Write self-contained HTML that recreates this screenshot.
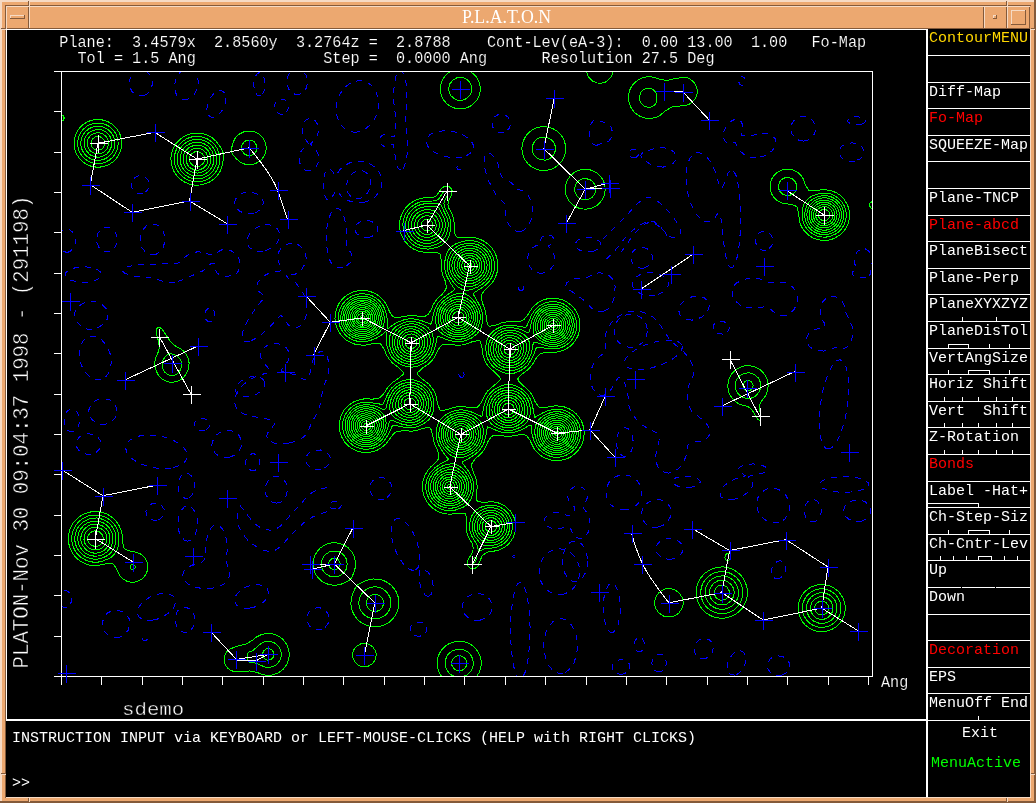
<!DOCTYPE html>
<html><head><meta charset="utf-8"><title>PLATON</title>
<style>
html,body{margin:0;padding:0;background:#000;}
svg{display:block;will-change:transform;}
text{white-space:pre;}
.hf{font-family:"Liberation Mono","DejaVu Sans Mono",monospace;font-size:15.17px;fill:#fff;stroke:#000;stroke-width:0.15px;}
.bf{font-family:"Liberation Mono","DejaVu Sans Mono",monospace;font-size:20.75px;fill:#fff;stroke:#000;stroke-width:0.45px;}
.mf{font-family:"Liberation Mono","DejaVu Sans Mono",monospace;font-size:15px;fill:#fff;}
.tf{font-family:"Liberation Serif","DejaVu Serif",serif;font-size:19.5px;fill:#fff;}
.g{fill:none;stroke:#0f0;stroke-width:1;}
.b{fill:none;stroke:#00f;stroke-width:1;stroke-dasharray:6 6;}
.w{fill:none;stroke:#fff;stroke-width:1;}
.bx{fill:none;stroke:#00f;stroke-width:1;}
</style></head><body>
<svg width="1036" height="803" viewBox="0 0 1036 803">
<g shape-rendering="crispEdges">
<rect x="0" y="0" width="1036" height="803" fill="#eca870"/>
<rect x="0" y="0" width="1036" height="2" fill="#f6dac4"/><rect x="0" y="0" width="2" height="803" fill="#f6dac4"/>
<rect x="0" y="801" width="1036" height="2" fill="#845a3a"/><rect x="1034" y="0" width="2" height="803" fill="#845a3a"/>
<rect x="5" y="5" width="1026" height="1" fill="#845a3a"/>
<rect x="5" y="5" width="1" height="793" fill="#845a3a"/>
<rect x="6" y="6" width="1024" height="1" fill="#f6dac4"/>
<rect x="6" y="6" width="1" height="23" fill="#f6dac4"/>
<rect x="6" y="797" width="1025" height="1" fill="#f6dac4"/>
<rect x="1030" y="29" width="1" height="769" fill="#f6dac4"/>
<rect x="7" y="28" width="1023" height="1" fill="#845a3a"/>
<rect x="1029" y="7" width="1" height="22" fill="#845a3a"/>
<rect x="28" y="7" width="1" height="21" fill="#845a3a"/>
<rect x="29" y="7" width="1" height="21" fill="#f6dac4"/>
<rect x="10" y="15" width="15" height="1" fill="#f6dac4"/>
<rect x="10" y="15" width="1" height="4" fill="#f6dac4"/>
<rect x="10" y="18" width="15" height="1" fill="#845a3a"/>
<rect x="24" y="15" width="1" height="4" fill="#845a3a"/>
<rect x="983" y="7" width="1" height="21" fill="#845a3a"/>
<rect x="984" y="7" width="1" height="21" fill="#f6dac4"/>
<rect x="1006" y="7" width="1" height="21" fill="#845a3a"/>
<rect x="1007" y="7" width="1" height="21" fill="#f6dac4"/>
<rect x="993" y="15" width="4" height="1" fill="#f6dac4"/>
<rect x="993" y="15" width="1" height="4" fill="#f6dac4"/>
<rect x="993" y="18" width="4" height="1" fill="#845a3a"/>
<rect x="996" y="15" width="1" height="4" fill="#845a3a"/>
<rect x="1011" y="10" width="15" height="1" fill="#f6dac4"/>
<rect x="1011" y="10" width="1" height="15" fill="#f6dac4"/>
<rect x="1011" y="24" width="15" height="1" fill="#845a3a"/>
<rect x="1025" y="10" width="1" height="15" fill="#845a3a"/>
<rect x="28" y="1" width="1" height="5" fill="#845a3a"/>
<rect x="29" y="1" width="1" height="5" fill="#f6dac4"/>
<rect x="1006" y="1" width="1" height="5" fill="#845a3a"/>
<rect x="1007" y="1" width="1" height="5" fill="#f6dac4"/>
<rect x="1" y="28" width="5" height="1" fill="#845a3a"/>
<rect x="1" y="29" width="5" height="1" fill="#f6dac4"/>
<rect x="1031" y="28" width="4" height="1" fill="#845a3a"/>
<rect x="1031" y="29" width="4" height="1" fill="#f6dac4"/>
<rect x="1" y="773" width="5" height="1" fill="#845a3a"/>
<rect x="1" y="774" width="5" height="1" fill="#f6dac4"/>
<rect x="1031" y="773" width="4" height="1" fill="#845a3a"/>
<rect x="1031" y="774" width="4" height="1" fill="#f6dac4"/>
<rect x="28" y="798" width="1" height="4" fill="#845a3a"/>
<rect x="29" y="798" width="1" height="4" fill="#f6dac4"/>
<rect x="1006" y="798" width="1" height="4" fill="#845a3a"/>
<rect x="1007" y="798" width="1" height="4" fill="#f6dac4"/>
<rect x="6" y="29" width="1024" height="768" fill="#000"/>
</g>
<text class="tf" x="462" y="23.2" textLength="89" lengthAdjust="spacingAndGlyphs">P.L.A.T.O.N</text>
<g shape-rendering="crispEdges">
<path class="w" d="M53.5,71.5H872.5V676.5H53.5M61.5,71.5V685"/>
<path class="w" d="M53.5,111.5H61.5M53.5,152.5H61.5M53.5,192.5H61.5M53.5,232.5H61.5M53.5,273.5H61.5M53.5,313.5H61.5M53.5,353.5H61.5M53.5,394.5H61.5M53.5,434.5H61.5M53.5,474.5H61.5M53.5,515.5H61.5M53.5,555.5H61.5M53.5,595.5H61.5M53.5,636.5H61.5M101.5,676.5V685M142.5,676.5V685M182.5,676.5V685M222.5,676.5V685M263.5,676.5V685M303.5,676.5V685M343.5,676.5V685M384.5,676.5V685M424.5,676.5V685M464.5,676.5V685M505.5,676.5V685M545.5,676.5V685M586.5,676.5V685M626.5,676.5V685M666.5,676.5V685M707.5,676.5V685M747.5,676.5V685M787.5,676.5V685M828.5,676.5V685M868.5,676.5V685"/>
<!--BLUE-->
<clipPath id="pc"><rect x="62" y="72" width="810" height="604"/></clipPath>
<g clip-path="url(#pc)">
<path class="b" d="M188,99.1 183,99.5 179,97.6 177,95.5 175.7,93 174.5,87 175.2,81 178.1,75 180,72.7 183,70.4 188,69 192,69.9 195,72.2 197.6,77 198.4,82 197.5,88 195.2,93 192,96.7 188,99.1ZM300,94.2 296,94.6 292,93 288.6,89 287,84 287,79 288.9,74 292,70.5 296,68.9 300,69.3 303,71 306,75 307.3,79 307.3,84 306,88.5 303.5,92 300,94.2ZM145,95.1 140,96 136,94.8 132,91.5 129.7,87 129.2,82 130.5,77 133.4,73 138,70.5 143,70.3 146.9,72 149.9,75 151.9,79 152.4,84 151.1,89 148.2,93 145,95.1ZM401,170.1 399,169.1 398,167.7 396.2,163 393.6,145 392,144.3 388,146.4 384,146.4 380.8,144 379.9,142 379.7,140 381,136.4 384,134.3 388,134.3 393,137.1 394,136.6 394.7,135 395.7,128 396,121 393.8,102 394,88 396,76.4 398,71.9 400,70.3 402,71 404,74.3 405.6,80 406.6,87 407,100 405.2,120 407.6,145 407.2,154 406,161.5 404,167.3 402.9,169 401,170.1ZM261,95.4 259,95.9 257,94.8 255,91.6 253.9,87 253.9,82 255,77 257,73.8 259,72.8 261,73.3 263,75.5 264.4,79 265,83 264.8,87 264,91 263,93.2 261,95.4ZM743,85.2 741,85.2 740,84.6 738.7,82 738.6,80 739.4,78 740.4,77 742,76.5 744,77.3 745.4,80 745.1,83 743,85.2ZM357,132.1 353,132.1 349,131.1 345,128.9 341.9,126 339,121.7 337.2,117 336.3,112 336.3,107 337,102 339,96.2 341.3,92 344.4,88 348,84.8 352,82.5 357,81 361,80.8 365,81.6 368,83 371,85.1 374,88.4 376.1,92 377.8,97 378.5,106 377.7,111 376.1,116 374,120.1 371.2,124 365,129.3 361,131.2 357,132.1ZM214,117.1 212,117.2 210,116.6 207.7,114 206.8,109 207.8,103 210.2,98 214,93.3 218,90.9 222,90.8 224.6,93 225.7,96 225.9,100 225.1,104 223,109 221,112 218,115 214,117.1ZM283,114 280,114 277.8,113 275.9,111 274.7,108 274.7,105 275.9,102 277.8,100 280,99 283,99 285.2,100 287.2,102 288.3,105 288.3,108 287.1,111 285.2,113 283,114ZM504,132.3 500,132.6 497,131.7 494,129.3 492.3,126 492,122.4 493,119.1 495,116.5 498,114.7 501,114.1 505,114.9 508,117.1 510,120.4 510.5,124 509.3,128 507,130.7 504,132.3ZM804,141.1 799,140.3 795,137.9 792.1,134 790.9,129 791.7,124 794.3,120 798,117.4 803,116.2 808,117.1 812,119.8 814.8,124 815.7,128 814.9,133 812.5,137 808.3,140 804,141.1ZM862,124.1 856,124.8 851,124 848,122 847.8,120 850.1,118 853.7,117 858,116.8 862,117.5 864.9,119 865.8,121 864.4,123 862,124.1ZM309,171 305,170 302,167.5 299.7,163 299.1,158 300,153.3 301.8,150 308.7,144 303.2,136 302.1,132 302,129 303,124.2 304.9,121 307,119.2 310,118.3 313,119 315,120.5 316.8,123 318,126.1 318.4,131 317.2,136 315.4,139 310.5,144 317,151.6 318.3,155 318.7,159 318,163.3 316,167.2 313,169.9 309,171ZM597,145.2 594,144.9 592,142.9 590.3,139 589.5,134 589.7,129 591,124 593,121 596,119.7 608.7,124 611.1,127 612.4,132 611.6,137 609,140.9 607,142 602,143 597,145.2ZM756,158 750,157.6 745,155.2 739,150.2 737.6,148 736,143.6 735,142.5 729,143.3 727,142.8 724.8,141 723.4,137 724,131 727,125.2 731,121.3 734,119.7 737,119.3 739,119.9 741,121.5 742.2,124 742.5,127 741.2,134 741.5,135 743,135.8 751,136.1 758,133.7 765,133.1 771,134.7 774.8,138 775.9,141 775.9,144 774.2,148 772,150.9 768.1,154 764.3,156 756,158ZM462,157 455,157.7 448,157.1 441,155.3 435.7,153 431.2,150 427.7,146 426.3,142 427.1,138 429.6,135 433,133 438,131.5 443,130.9 449,131.1 454.6,132 460,133.7 464.9,136 469.1,139 471.8,142 473.2,145 473.5,148 472.4,151 470,153.6 466,155.9 462,157ZM855,161 851,161.4 847,160.8 843.2,159 840.9,157 839.4,154 839.2,151 840.4,148 842.1,146 846,143.8 852,142.8 857.6,144 861.9,147 863.8,151 863.3,155 862.1,157 860,158.9 855,161ZM663,167.1 657,166.7 651.9,165 643,159.8 641.4,158 640.9,155 642.4,153 645,151.4 657,147.9 664,147.6 671,149.8 673.9,152 675.9,155 676.3,158 675.7,160 673.5,163 670.6,165 667,166.4 663,167.1ZM636,157.4 633,157.8 631.2,157 630,155.7 629.4,154 629.6,152 630.9,150 632,149.3 635,149 636.9,150 638,151.5 638.5,155 636,157.4ZM521,231.3 518,231.5 515,230.6 512,228.5 509.1,225 507.2,221 506,216.6 505.3,205 503.9,203 496,195 488,179.7 485.3,171 484.3,163 485,156.3 487,153.2 489,152.8 491,153.7 495,158.2 498,164.1 501.4,176 502.8,178 505,179.6 510.4,182 518,189.3 522,190.5 525,192.2 528,195.3 530.1,199 531.7,204 532.4,209 532.3,214 531.3,219 529.3,224 527,227.4 524,230 521,231.3ZM733,267.3 731,267.7 729,265.8 726,257.3 724,245.3 721.7,222 720,214.1 719,212.5 718,213 714,218.9 711.4,221 708,222 704,221.1 700,218.4 696,213.7 692.3,207 689.5,200 687.7,193 686.4,185 685.9,177 686.4,170 687.9,163 690,158.2 693,154.6 696,152.9 699,152.6 703,154 707,157.3 710,161.1 715,170.7 719.5,186 720,187.4 721,188.3 722,187.6 724,184 728,173.3 730,170 732,169.3 733,169.8 736,175.4 738.1,184 739.9,199 740.6,213 740.5,227 739.7,241 738,253.5 736,261.7 733,267.3ZM365,202.1 360,202.8 356,202.7 348,200.6 341.7,197 337,190.4 336,189.9 331,199.4 329,200.6 327,199.6 325,196.2 324.1,193 323.3,184 324.4,175 325.4,172 327,169.5 328,168.9 330,169 332.2,171 335,175.1 336,175.5 339.6,170 344,165.9 350,162.7 357,161.3 362,161.5 367,162.6 371,164.4 374.8,167 378.5,171 381.1,176 382,181 381.4,187 379,192.4 375,197 370.5,200 365,202.1ZM460,169.4 457.4,169 456.8,168 457,166.9 459,165.9 461,166.9 461.2,168 460,169.4ZM143,193.3 139,193.6 136,192.6 133,190 131.6,187 131.4,183 132.6,180 135,177.4 138,175.9 142,175.8 145,177 147.3,179 148.9,182 149.2,186 148.2,189 146,191.6 143,193.3ZM254,213.1 249,213.8 244,213.1 240,211.4 237.1,209 235.3,206 234.8,202 235.7,199 237.9,196 243.1,193 250,192.1 256,193.5 260.9,197 263,201 263.1,204 262.6,206 259.8,210 257,211.9 254,213.1ZM343,267.1 340,267.7 337,267.6 334,266.2 331.8,264 329.3,259 326.7,246 326.2,233 328,220.5 331.4,212 334,209.1 336,208.1 338,208.2 340,209.6 342,212.5 344,217 345.6,223 346.6,230 346.7,246 351.4,254 352.2,257 351.8,260 349.9,263 347,265.3 343,267.1ZM370,237.1 367,237.5 363,237.1 359.9,236 357.1,234 355.6,232 354.9,229 355.6,226 357,224 361,221.5 366,220.5 371,221.1 375.9,224 378,228 377.4,232 374.7,235 370,237.1ZM156,254.3 151,254.9 146,252.7 142.1,248 140.3,242 140.4,236 142.6,230 146.2,226 151,224 156,224.5 160,227 163,231 164.7,236 164.8,242 163,247.8 160,251.8 156,254.3ZM263,251.1 259,251.4 255.7,251 252.8,250 250,248 248.4,246 247.3,243 247.2,240 247.9,237 249.5,234 251.9,231 258,226.8 262,225.4 266,224.8 270,225 273,225.9 277,228.6 279,232 279.4,236 278.1,241 276.3,244 272.8,247 268,249.6 263,251.1ZM110,251.3 106,251.8 102,250.3 99,247.4 97,243 96.6,238 98,233 101,229.2 105,227.2 109,227.2 112.6,229 115.2,232 117,236.6 117.2,241 116,245.3 113.5,249 110,251.3ZM68,252.2 64,251.9 61,249.9 58.9,247 57.5,242 57.9,237 59.8,233 63,230 66,229.1 69,229.5 72,231.5 74.4,235 75.4,239 75.4,243 74,247.2 71,250.8 68,252.2ZM766,250.1 762,250 759,248.4 756.9,246 755.5,242 755.8,238 757.2,235 760,232.3 763,231.3 766,231.4 769.4,233 771.8,236 772.8,239 772.7,243 771.5,246 769,248.7 766,250.1ZM543,273.1 540,273.2 537,272.5 534,271.1 531.5,269 529.4,266 528.2,263 527.7,257 529,252.7 532,248.4 535,246.2 540.6,244 540.7,240 542.1,237 545,235.3 549,234.9 552,236.1 553.9,239 553,242 548.7,246 548.8,247 552,250.6 553.7,254 554.5,257 554.4,261 553,265.7 550.7,269 547,271.8 543,273.1ZM594,251 587,251.8 580,250.3 577.8,249 575.8,247 575.1,245 575.4,243 578.1,240 584,237.8 590,237.5 596,238.9 600,241.9 600.9,245 600.2,247 599,248.4 594,251ZM250,341.2 246,341.9 243.5,341 242.2,339 242,335 244,328 249,318.2 255,309.3 263.9,298 264.2,297 263.5,295 258.4,291 257.1,289 256.8,286 258,282.3 261.3,278 266,274.6 271,272.6 280,271.1 281.3,270 281.2,268 278.1,261 277.7,257 279,251.4 282,247 286,244.6 290,243.5 294,243.5 298.6,245 303,248.6 305.4,253 306.2,258 304.9,264 301.8,269 297,273.5 293,274.9 287,273.4 285.9,274 285.9,275 288.7,279 293,280.4 296,283.1 302.8,293 305,297 306.7,303 307.1,309 306.3,315 304.6,320 302.9,323 300,326 297,327.5 294,327.8 291,326.9 289,325.5 286.8,323 283,316.8 281,315.7 280,316 270,326.7 263,333.1 256,338.2 250,341.2ZM644,268.2 640,268.1 636,266.5 633,263.8 631.1,260 631,256 632.6,252 635.7,249 639,247.6 643,247.4 647,248.6 650,251 652.2,255 652.5,259 651,263 648,266.2 644,268.2ZM866,277.3 862,278 857,277.4 853.9,276 852.4,274 852.7,272 854.9,269 855.6,267 854.2,261 855.2,255 858,250.8 862,248.7 865.5,249 868.7,251 870.8,254 872.1,258 872,263 870.1,269 870.6,272 870.4,274 868.7,276 866,277.3ZM175,282.1 166.1,282 150,277.7 138,276.7 131,275.6 124.3,273 123,271.5 122.9,270 124.9,268 126.9,267 136,264.9 144,264.3 176,263.8 180.3,262 185,257.2 188,255 192.3,253 197,251.9 203,252.1 211,255.1 214,254.2 221,250.1 224,249.6 228,249.9 231.5,251 234.8,253 237.6,256 239,258.9 239.5,262 238.5,271 236,273.9 233,275.5 226,276.4 222,275.7 219,274.5 217.2,273 216,271 215.4,265 214,263.7 212,263.3 210,264.2 206,268.5 202,271.3 181,280.5 175,282.1ZM88,282.1 78,282 70.5,280 66.2,277 65.4,275 65.7,273 67.4,271 71,269 76,267.6 82,266.9 87,267 92.9,268 98,270 100.5,272 101.5,275 99.7,278 95,280.6 88,282.1ZM604,311.3 601,311.9 598,311.8 593,309.6 586,302 576,294.3 566.6,288 565.5,286 566.7,283 569,280.9 573,278.9 576,278.2 583,278.1 587,277.4 598,272.9 604,273.1 609,275.3 612.6,279 614.5,283 615.1,287 614.6,295 613.5,300 611,305.5 608,309.1 604,311.3ZM655,295 650,295.4 645,294.9 640,293.3 636.1,291 633.5,288 632.4,285 632.7,282 634.2,279 636.2,277 640,274.7 644,273.1 647,272.7 653,272.8 657,273.5 661.3,275 664.5,277 666.5,279 668,282 668.3,285 667.2,288 665.7,290 663,292.1 659.1,294 655,295ZM786,315.2 782,315.6 778,314.6 775,312.9 770,308.9 765,306.8 751,308 745.1,307 740.3,305 736,301.7 732.9,297 732.1,291 733.5,286 736.4,283 742.7,280 747,278.7 752,278.1 759.8,279 770,282.8 783,282.6 786,283 789,284.2 792.6,287 795.4,291 797,296 797.2,301 796,305.8 793.7,310 790,313.4 786,315.2ZM522,290.5 520,290.5 518.5,289 518.5,287 520,285.5 522,285.5 523.5,287 523.5,289 522,290.5ZM692,320.1 688,319.8 685.1,319 680.8,316 679.6,314 678.9,311 679.2,308 680.5,305 682.8,302 685.2,300 691.5,297 698,296.2 702,296.9 704.4,298 707.7,301 709,304 709,307.4 707.7,311 705.4,314 701.7,317 697,319.1 692,320.1ZM824,351.1 817,350.5 811,347.8 809,346 807.1,343 806.5,341 806.6,338 808.6,334 812,331 816,329.3 822,327.7 824.6,326 824.8,324 821.4,318 820.2,314 820,310 821,305.2 823.3,301 827,297.7 831,296.3 835,296.5 840,299.1 842,301.3 844,304.9 846,313 852.1,326 853,332 852.5,337 850,343.5 848,346.1 846,347.7 843,348.4 838,347.1 836,347.1 830,349.9 824,351.1ZM92,330 87,329 79.9,325 76.2,321 74.5,316 75.2,311 78,306.7 83,303.2 89,301.6 96,302 102,304.6 106.4,309 108.1,314 107.4,319 104,323.9 97,328.3 92,330ZM210,322.1 208,321.6 206.2,320 205,317.2 204.8,315 205,312.9 206.2,310 208,308.4 210,307.9 212,308.5 213.5,310 214.5,312 214.9,315 214.5,318 213.5,320 212,321.5 210,322.1ZM669,473.1 665,472.7 661,470.6 658,467 656.4,463 655.7,459 655.7,455 659,441 659.1,438 658.6,435 657,433 648.5,429 642.3,425 637,420.1 633,415 630.8,411 629,406 627.8,394 626.5,388 624.2,382 622,378.6 620,377.1 618,378 610,391.2 607,393.9 604,395.2 600,395.1 596,392.8 593,389 591,384 590.2,379 590.3,375 591.1,370 592.9,365 597,358.6 603.9,353 605.2,351 604.9,338 605.9,333 608,328 611.2,323 616.1,318 622,314.2 628,312 635,311.2 641,311.7 648,314 653,317 659,323.2 670,340.3 682.9,351 688.9,358 692.5,365 693.8,372 692.7,378 688.9,385 687.6,389 687.6,398 689.4,407 691.6,411 705,422 708,425.8 709.5,429 709.9,432 709.3,435 708.2,437 706,439 701.3,441 692,442.3 688.8,444 687.6,446 686,456.4 682.4,464 679.1,468 676,470.5 673,472.1 669,473.1ZM723,334.1 718,333.7 716,332.8 713.9,331 713,329 713,326.4 714,324.4 716,322.6 719,321.4 723,321.4 726.9,323 728.7,325 729.4,328 728.3,331 726,333 723,334.1ZM101,379.3 98,379.7 95,379.3 92,378.2 88.7,376 85.7,373 83,369.1 80,361.5 79.1,353 79.6,349 80.8,345 82.4,342 85,339 90,336.4 93,336.1 96,336.8 102,340.2 107,346.3 110.2,354 111.3,362 110,370 108.6,373 106.4,376 104,378 101,379.3ZM289,443.2 283,443.9 278,443.7 274,443 269.6,441 267.1,438 266.9,435 268.3,432 274.9,424 275,422 273,420.8 266.6,419 249,415.8 243.6,414 240,411.8 237.2,409 235.5,406 234.7,403 234.7,399 236.2,394 239,389.4 243,384.9 248,381 253,378 259,375.4 268,372.6 270.2,371 269.1,369 262.2,361 260.9,358 260.6,355 261.6,351 264,347.7 267.9,345 272,343.7 277,343.5 282.3,345 286.4,348 288.9,352 289.5,355 288.9,359 286.8,363 282,369 281.4,370 281.6,371 283.8,372 295,374.7 305,380 307,379.5 309.1,377 313,360.1 315.1,356 317.9,353 320,351.8 322,351.4 325,352.7 327.1,356 328.4,361 328.9,367 328.3,373 326.6,379 322.9,388 320.4,404 317.4,413 311.3,423 308.4,431 305.7,435 302.2,438 298.7,440 289,443.2ZM829,449.1 826,448.5 824,446.4 822,442.4 820.6,437 819.6,430 819.3,422 820.4,405 823,390 828,374 831,367.8 834,363.4 837,360.7 840,359.8 843,361.3 845,364 847.7,373 848.8,387 847.9,403 845,419.4 840,435.3 835,444.5 832,447.7 829,449.1ZM463,377 461,377.4 459.1,376 458.8,374 460,372.4 462,372 463.6,373 464.2,375 463,377ZM106,424.1 101,424.3 96,422.7 92,419.7 89.3,415 88.8,410 90.6,405 94,401.4 99,399 105,398.6 110,400.1 114,403.2 116.8,408 117.2,413 115.3,418 111.3,422 106,424.1ZM73,432 70,431.9 67,429.7 65,426.3 64.1,422 64.4,417 65.9,413 68,410.4 71,409 74,409.5 77,412 78.5,415 79.4,419 79.3,423 78,427.4 76,430.3 73,432ZM205,430.1 200,430.4 198,429.7 195.8,428 194.6,426 194.4,424 195,422 196.8,420 200,418.6 203,418.4 206,419.2 208.4,421 209.5,423 209.5,426 208,428.3 205,430.1ZM626,456.3 622.6,456 619.3,453 617.1,448 616.4,443 616.9,437 618.8,432 622,428.6 625,427.7 628,428.7 630.2,431 632,435 633.1,441 632.8,446 631.3,451 629,454.5 626,456.3ZM230,457.1 224,457.6 219,456.1 214.9,453 212.3,448 211.9,445 212.3,442 214.6,437 218.8,433 224,430.8 230,430.5 235,432.1 239,435.4 241.3,440 241.7,443 241.3,446 239,451 235,454.9 230,457.1ZM91,454.2 87,454.3 82.5,453 79,450.5 77,447.5 76.2,444 77.2,440 79.5,437 83,434.8 88,433.7 94,434.7 98,437.2 100.5,441 101,445 99.5,449 96,452.4 91,454.2ZM171,468.1 163,468.6 154,467.8 145,465.5 137,462 131.2,458 127,453 125.6,448 126.5,444 129,440.8 133.5,438 139.6,436 146,435.2 153,435.2 161,436.3 168,438.2 175,441.2 180.9,445 184.8,449 186.9,453 187.2,457 185.5,461 182.4,464 177,466.6 171,468.1ZM321,469.2 317,469.4 313,468.6 309.8,467 306.9,464 305.7,461 306,457.2 307.8,454 310.2,452 315,450.1 320.4,450 325.8,452 329,455.1 330,457.1 330.4,460 329.2,464 326,467.2 321,469.2ZM255,470.3 252,470.7 249,469.4 246.9,467 245.8,464 245.9,460 247,457.3 249.1,455 252,453.8 254.5,454 257,455.3 259,457.8 260,461 259.9,464 259,466.7 257.2,469 255,470.3ZM734,499.2 729,499.8 724,499 721,496.9 720.1,495 720,492.9 720.9,490 722.9,487 728.8,482 735,478.9 745.4,476 739,470.7 738.5,469 739.8,467 745,464.8 753,463.9 761,464.9 765.6,467 766.6,468 766.9,470 765,472 762,473.3 750.4,476 748.3,477 752,479.9 753,482 752.9,485 751.6,488 748.1,492 744.1,495 739,497.6 734,499.2ZM188,498.4 185,498.4 181.6,496 179,492 178,488 178,483.7 179.2,479 182,474.7 185,473 188,473.3 191.7,476 194,480 194.8,484 194.6,489 193.3,493 191,496.3 188,498.4ZM626,510 619,509.6 613,506.6 610.1,504 608.1,501 606,495 606.4,488 609.2,482 611.9,479 614.7,477 621,474.8 628,475.1 634.1,478 637,480.6 639,483.4 641.3,490 641,496.4 639.9,500 638.4,503 635.3,506 632.2,508 626,510ZM277,503.1 273,502.5 269,499.8 266.1,495 265.2,490 265.9,485 268,480.7 272,477.2 276,476.2 280,476.9 284,479.9 286.4,484 287.4,489 286.8,494 285,498.1 281,501.9 277,503.1ZM692,487.1 684,487.4 677.4,486 675,484.7 673.3,483 672.9,482 673.2,480 675,478.2 677,477.3 685,476.2 693,476.9 698.3,479 700,481 700,482.4 699.1,484 695.9,486 692,487.1ZM851,492 839,492.1 829,490.7 822,488 819.8,486 819.4,484 822,481 826.5,479 834,477.4 842,476.7 851,477 858,478 864.4,480 868.5,483 868.9,485 868.5,486 865,488.7 858,491 851,492ZM384,499 380,499.4 376,498.4 372.8,496 370.3,492 369.8,487 371,483.1 373.5,480 377,477.9 382,477.3 386,478.5 389.2,481 391.4,485 391.9,489 390.9,493 388,496.8 384,499ZM582,538.3 578,538.2 575,536.3 573,533.8 570.8,529 569,527.1 567,526.6 558,529.1 552,528.5 547,526 545,523.5 544.3,521 545,518.3 546.8,516 549.9,514 553,513 560,512.9 568,515.9 570,515.7 572.3,514 574.5,511 575.1,509 574.4,507 569,500.9 567.9,498 568,494 569,491.4 571,488.9 574,487 577,486.4 580,486.6 583,488 585.2,490 586.9,493 587.2,498 583.7,506 583.5,508 588,514.4 589.9,521 589.8,527 588.3,532 585.7,536 582,538.3ZM779,522.3 773,522.8 766.9,521 761.7,517 758,511 756.6,504 758,497.4 761.8,492 767,488.9 773,488.1 777,488.9 780,490.2 783,492.2 785.7,495 788.9,501 789.9,508 788.4,514 784.8,519 782,521 779,522.3ZM658,527.1 651.7,527 648.8,526 646,524.2 642.8,520 641.6,514 642.4,508 643.4,506 645,504.3 652,500.5 658,499.4 663,500.3 667.3,503 670.2,507 671.2,512 670.3,517 667.2,522 663,525.3 658,527.1ZM816,521.1 812,521.9 809,520.9 806.1,518 804.5,514 804.2,509 805.3,505 808,501.4 811,499.8 814,499.7 817,501.1 819.5,504 821,508 821.2,512 820.2,516 818.4,519 816,521.1ZM862,521 857,521.7 853,521.1 849,519.4 846,516.8 844,513 843.7,510 845.1,506 847.7,503 853,500.4 859,499.9 865,501.7 868.8,505 870.7,509 870.2,514 869,516.3 867,518.4 862,521ZM336,509 332,508.5 329.6,507 328.9,505 330,503.2 332.1,502 335,501.5 338,501.9 340.2,503 341.5,505 340.8,507 339,508.3 336,509ZM157,520.1 153,520.1 150.2,519 147.8,517 146.2,514 145.9,511 146.8,508 149,505.4 152,503.8 156,503.3 159,504.1 162,506.1 164,509.3 164.3,513 163.2,516 160.1,519 157,520.1ZM188,541.1 186,540.9 184,539.8 181,536.4 178.8,531 177.9,524 178.6,517 180.8,511 184,507.2 186,506.1 188,505.8 192,507.7 195,511.7 197,517.7 197.5,524 196.8,530 194.6,536 192,539.4 190,540.7 188,541.1ZM414,570.2 412,570.2 409,569.1 406,566.9 403,563.7 398,556 394.1,547 391.8,538 391.2,529 391.8,525 392.9,522 394,520.3 396,518.8 398,518.4 401,519.1 404,520.9 407,523.7 413,532.4 417,541.6 419.5,552 419.8,561 419,565.4 418,567.7 416,569.5 414,570.2ZM213,588.1 202,588.4 197,587.6 191.9,586 188,584 184.7,581 183,578 182.6,575 184.1,571 188,567.3 193,564.8 201,562.7 204.3,560 205.6,557 205.8,544 208,533.8 210,529.6 212,527 214,525.5 217,525 220,526.3 222,528.5 224,532 226,538 227.2,548 226.6,562 229.2,573 229.4,576 228.1,580 224.1,584 219,586.6 213,588.1ZM672,559.1 667,559.1 663.1,558 659.7,556 657.1,553 656,549 656.5,546 658.3,543 662,540.2 668,538.5 674,539 679,541.3 682.2,545 683,547.4 683.1,550 681.3,554 678,557 672,559.1ZM564,594 560,594.6 556,594.3 552,593.1 548.4,591 545.1,588 542.8,585 540.8,581 539.4,576 539.1,572 539.5,567 541,562 543,558.2 545.5,555 549,552 553,550 556,549.2 560,548.9 564,549.5 567.9,551 571,553 574,555.9 576.2,559 578.1,563 579.2,567 579.6,572 579.3,576 578.3,580 576.5,584 574,587.6 571,590.5 568,592.4 564,594ZM515,557.4 513,557.4 512.8,556 515,555.3 515.7,556 515,557.4ZM780,578.1 777,578.9 774,577.8 772,575 771.5,572 772,568 774,564.2 777,561.6 780,560.8 782,561.2 784,562.7 785.2,565 785.6,568 785.2,571 784,574 782,576.6 780,578.1ZM429,596.1 427,596 425,594.8 423,592.4 420.9,588 419.6,582 419.1,575 419.7,571 421,569.6 424,569.6 427.9,572 430.2,575 432,579.2 433.1,585 432.9,590 431.4,594 429,596.1ZM521,678.3 519,678 517,675.7 514,667.5 511.5,652 510.4,633 511,613.9 513,597.9 516,587 518,583.6 520,582.4 522,583.1 524,585.9 527,595.4 529.1,609 530.1,628 529.6,645 527.8,661 525,672.5 523,676.5 521,678.3ZM613,632.5 611,632.6 609,631.3 606,626.2 604,618.3 603.2,609 603.9,598 605.9,590 609,584.5 612,583.1 615,584.9 618,590.7 619.7,598 620.4,606 620,615.5 618.3,624 616,629.6 613,632.5ZM250,608.1 246,608.4 242,607.9 239,606.8 236.5,605 235.2,603 234.6,600 235.2,597 236.8,594 242.3,589 246,587 251,585.3 259,584.7 263,585.7 265.4,587 267.4,589 268.5,592 268,595.8 266.3,599 263.5,602 259.1,605 254.5,607 250,608.1ZM67,607.2 64,607.4 62,606.4 60,604 59,601 59,597 60,594.2 62,591.8 64,590.8 67,591 68.7,592 70.3,594 71.4,597 71.6,600 70.9,603 69,605.9 67,607.2ZM153,620.1 148,620.5 144.3,620 141.6,619 139,616.9 137.6,614 137.6,611 139,607 141.1,604 144.1,601 148.4,598 153,595.7 158,594.1 163,593.3 167,593.5 170,594.3 173,596 175,598.9 175.4,602 174.5,606 172.7,609 168.5,613 164,616.1 158,618.9 153,620.1ZM480,620.2 474,620.1 469,618.2 465,614.7 462.6,610 462.4,605 464.3,600 468,596.3 473,594 479,593.5 485,595.4 489.4,599 491.9,604 492.1,609 490,614.1 485.8,618 480,620.2ZM187,632.1 183,632.1 179.3,630 177,627 175.4,622 175.5,617 177,611.6 179.5,609 183,607.7 187,607.8 190,609.2 193,612.6 194.6,617 194.8,622 193.2,627 190.9,630 187,632.1ZM322,629 318,629.8 313.9,629 310,626.4 307.8,623 306.9,618 307.9,614 310,610.9 314,608.3 319,607.6 323,608.7 326.1,611 328.5,615 329.1,619 328,623.5 325.4,627 322,629ZM120,637 115,637.6 109.6,636 105.8,633 102.9,628 102.3,623 104,617.2 107.6,613 112,610.7 117,610.1 122,611.5 126.7,615 129.3,619 129.9,624 128.3,630 125,634.3 120,637ZM563,673.1 559,673.2 556,672.3 553,670.4 550,667.2 547.9,664 545.8,659 543.9,649 543.9,643 544.5,638 546,632.4 547.9,628 550,624.8 553,621.7 556,619.8 560,618.7 563,619 566,620.1 569,622.3 572,625.8 575.8,634 577.5,644 576.8,654 573.9,663 572,666.2 569,669.7 566,671.9 563,673.1ZM420,636.2 417,636.1 414,635.1 411.5,633 410.4,631 410.2,628 411,625.9 413,623.7 416,622.2 420,622 423,622.9 425.6,625 426.7,627 427,630 425.7,633 423.4,635 420,636.2ZM146,640.3 143,640.2 142,639 142.2,638 144,636.9 146,637.1 147.2,638 147.4,639 146,640.3ZM641,651.5 639,651.8 637,651 635.3,649 634.4,646 635,640.9 637,638.3 639,637.5 641,637.8 642.5,639 644.4,643 643.9,648 642.8,650 641,651.5ZM706,658.3 702,658.8 698,657.3 695.8,655 694.3,651 694.4,647 696.1,643 699.2,640 703,638.5 706,638.5 709.5,640 712,642.8 713.1,646 713,650 712,653 709.7,656 706,658.3ZM735,675.1 731,674.8 728.2,672 727.2,668 727.7,663 729.8,658 733,653.8 737,651.2 741,650.9 743.2,652 745.2,655 745.9,659 745.3,663 743.8,667 741.2,671 738,673.8 735,675.1ZM660,672 657,671.7 654.5,670 652.6,667 651.9,664 652.2,660 653.7,657 656,654.8 659,653.9 662,654.7 664,656.4 665.6,659 666.3,662 666.1,665 665,668.2 663,670.6 660,672ZM782,675.1 778,675.5 774,674.7 771,673 768.5,670 767.4,667 767.7,663 770,659.2 773,657 777,655.8 782,656.3 786,658.3 788.9,662 789.7,666 788.6,670 786,673 782,675.1ZM623,674 620,674.2 617,673.5 614.5,672 612.8,670 612,667.8 612.3,665 613.4,663 616,660.9 620,659.8 623.5,660 627,661.5 629.3,664 630.1,667 629.2,670 627,672.4 623,674ZM237.2,513.1C237.7,515.7 237.2,523.5 239.8,528.7C242.4,533.9 247.2,540.7 252.9,544.4C258.5,548.1 266.8,553.1 273.7,550.9C280.7,548.7 288.5,536.8 294.6,531.3C300.6,525.9 304.3,521.8 310.2,518.3C316.1,514.8 326.7,511.8 330,510.5M239.8,505.3C242.9,508.7 252,522.2 258.1,526.1C264.2,530 270.2,531.3 276.3,528.7C282.4,526.1 288.5,516.6 294.6,510.5C300.6,504.4 306.9,496.2 312.8,492.2C318.7,488.3 327.1,487.9 330,487M602.6,239.4C606.1,235.9 616.1,225.5 623.5,218.6C630.8,211.6 639.5,199 646.9,197.7C654.3,196.4 662.1,205.1 667.8,210.7C673.4,216.4 680.4,227.2 680.8,231.6C681.2,235.9 675.1,238.5 670.4,236.8C665.6,235.1 658.6,222 652.1,221.2C645.6,220.3 637.4,226.8 631.3,231.6C625.2,236.4 620,245 615.6,249.8C611.3,254.6 606.9,258.5 605.2,260.3M620.8,252.4C623.5,249 631.7,236.6 636.5,231.6C641.3,226.6 645.2,222.9 649.5,222.5C653.9,222 659.5,226.4 662.5,229C665.6,231.6 666.9,236.6 667.8,238.1M682,345.5 682.1,348.3 680.8,351.4 678.1,354.7 674.1,358 669.1,361.1 663.4,363.9 657.1,366.3 650.6,368.1 644.3,369.2 638.4,369.6 633.3,369.2 629.2,368.2 626.3,366.4 624.7,364.1 624.6,361.3 625.9,358.2 628.6,355 632.6,351.7 637.6,348.5 643.4,345.7 649.6,343.4 656.1,341.6 662.4,340.5 668.3,340.1 673.4,340.4 677.5,341.5 680.5,343.2ZM647.3,330.7 646.9,334.4 645.7,337.9 643.7,341.1 641.1,343.7 638,345.6 634.5,346.9 630.8,347.3 627.1,346.9 623.6,345.6 620.4,343.7 617.8,341.1 615.8,337.9 614.6,334.4 614.2,330.7 614.6,327 615.8,323.5 617.8,320.4 620.4,317.8 623.6,315.8 627.1,314.6 630.8,314.2 634.5,314.6 638,315.8 641.1,317.8 643.7,320.4 645.7,323.5 646.9,327ZM264.5,381.5 264.8,383.6 264.4,385.8 263.4,388.1 261.6,390.3 259.3,392.4 256.5,394.1 253.5,395.5 250.2,396.4 247,396.9 243.9,396.8 241.1,396.2 238.8,395.2 237.1,393.7 236,391.8 235.7,389.8 236.1,387.5 237.1,385.2 238.9,383 241.2,381 244,379.2 247,377.9 250.3,376.9 253.5,376.5 256.6,376.6 259.4,377.1 261.7,378.2 263.4,379.7ZM587.5,561.3 587.2,565.8 586.3,570.1 584.8,574 582.8,577.2 580.4,579.6 577.8,581.1 575,581.6 572.2,581.1 569.6,579.6 567.2,577.2 565.2,574 563.7,570.1 562.8,565.8 562.5,561.3 562.8,556.8 563.7,552.5 565.2,548.6 567.2,545.4 569.6,543 572.2,541.5 575,541 577.8,541.5 580.4,543 582.8,545.4 584.8,548.6 586.3,552.5 587.2,556.8ZM369.7,188.7 368.3,191.6 366.5,194.1 364.2,196.2 361.7,197.7 359,198.5 356.3,198.7 353.8,198.1 351.4,196.9 349.5,195.1 348,192.7 347,189.9 346.6,186.9 346.8,183.8 347.6,180.7 349,177.8 350.9,175.2 353.1,173.1 355.6,171.6 358.3,170.8 361,170.6 363.6,171.2 365.9,172.4 367.9,174.3 369.4,176.6 370.3,179.4 370.7,182.4 370.5,185.6Z"/>
<path class="g" d="M602,83.1 597.1,83 592.4,81 589,77.7 588,76 586.9,73 586.6,70 586.9,67 588,64 589,62.3 592.4,59 597.1,57 600,56.7 602.4,57 607.2,59 611,62.9 612.1,65 612.9,68 612.9,72 612.1,75 611,77.1 607.2,81 605.5,82 602,83.1ZM466,108.1 462,108.8 458,108.8 454,107.9 451,106.6 447.2,104 444.4,101 442.5,98 441,94 440.3,90 440.5,86 441.5,82 442.9,79 445,76 448,73.1 451,71.2 455,69.6 459,69 463,69.1 467,70.1 470,71.4 473,73.5 475.6,76 477.7,79 479.4,83 480.2,87 480.2,91 479.3,95 478,98.2 476,101.3 473,104.3 470,106.4 466,108.1ZM653,118.1 649,118.4 646,118.2 640,116.3 637,114.5 634.1,112 630.6,107 628.6,101 628.4,98 628.7,94 629.4,91 631,87.4 633,84.5 635.4,82 638,80 642,78 645.9,77 649,76.8 653,77.1 659,79.1 667,80.6 673,78.9 677,78.6 681,77.4 685,77.4 687.8,78 690,79 693.7,82 696.2,86 697,88.8 697.2,92 697,94.1 696,97.2 695,99.1 692.4,102 689.6,104 687,105 682,105.3 678,106.5 673,106.7 671,107.3 665,111.2 660,115.4 656.8,117 653,118.1ZM61,121.1 60,120.9 58.6,120 57.9,118 58.6,116 60,115.1 61,114.9 63,115.6 63.9,117 64.1,118 63.9,119 63,120.4 61,121.1ZM100,167.1 96,167.1 91,166.2 87,164.6 83,161.9 79.1,158 76.5,154 75.3,151 74.2,146 74.1,141 75.2,136 77.4,131 79.6,128 83,124.6 86,122.6 91,120.4 96,119.5 100,119.5 105,120.5 109,122.2 113,124.8 116.2,128 118.9,132 120.7,136 121.7,141 121.7,146 120.5,151 118.7,155 116,158.9 113,161.8 109,164.5 104,166.4 100,167.1ZM548,170.1 544,170.5 539,170 535,168.7 531,166.4 528,163.8 525.1,160 523.2,156 522.2,152 521.9,148 522.4,144 523.7,140 525.9,136 528.4,133 532,130.1 536,128.1 540,127 545,126.7 549,127.3 553,128.7 556.8,131 560,133.9 562.4,137 564.3,141 565.4,145 565.7,149 565.3,153 564,157 561.9,161 559.4,164 556,166.8 552,168.9 548,170.1ZM254,164 251,164.6 247,164.6 244,163.9 241,162.6 236.5,159 233.1,155 231.6,152 231.6,148 233.3,142 234.7,139 237,136 239,134.3 244,131.7 247,131 251,131 254,131.6 257,132.8 260,134.8 262.2,137 264.2,140 265.4,143 266,146 266,150 265.3,153 264,156 262,158.9 259.8,161 257,162.8 254,164ZM200,185 195,185.1 190,184.3 185,182.3 181,179.7 177.1,176 174.3,172 172.4,168 171.2,163 170.9,158 171.6,153 173.3,148 176.4,143 180,139.3 184,136.4 189,134.2 194,133.1 199,133.1 203,133.7 208,135.4 212,137.7 216,141.2 219.7,146 222.6,151 223.7,155 223.5,159 221.9,167 220.3,171 217.7,175 214,178.9 210,181.8 206,183.6 200,185ZM587,209.1 583,209 579,208.2 575,206.3 572,204.1 569.1,201 567.3,198 566,194.6 565.3,191 565.4,187 566.2,183 568,179.1 570,176.3 573,173.4 576,171.5 579,170.2 583,169.4 587,169.3 591,170.1 595,171.8 598,173.9 601,177 602.9,180 604.2,183 605,187 605.1,191 604.3,195 602.6,199 600.5,202 597.4,205 594.2,207 591,208.3 587,209.1ZM829,240 824,240.5 818,239.8 814,238.4 809,235.5 804.4,231 802.3,228 800.8,225 799.5,221 798.6,213 796.9,207 795,205.6 789,204.1 784,203.6 781,202.7 777,200.5 773.5,197 771.7,194 770.6,191 770.1,188 770.2,184 770.9,181 772.2,178 774.3,175 777,172.5 781,170.3 785,169.2 790,169.2 794,170.3 798,172.5 801.5,176 803.3,179 805.1,184 807.8,189 809,190.3 811,190.8 815,190.8 821,189.9 825,189.7 831,190.6 836,192.6 839,194.4 842,197 844.6,200 847.5,205 848.6,208 849.4,212 849.5,218 848.7,222 847.6,225 844.8,230 840,235 834,238.6 829,240ZM475,568.3 472,568.7 470,568 468.1,566 467.3,564 467.3,562 467.9,560 472.7,552 473.2,548 472.4,544 468.4,537 466.7,532 466.1,527 466.3,520 465.9,515 465.4,514 464,513.3 459,513.2 451,514.1 447,514 443,513.3 438,511.5 433,508.4 429.4,505 426.4,501 423.7,495 422.6,490 422.4,486 423.2,480 424.6,476 428.1,470 430.7,467 435.3,463 438.3,459 439,457 437.8,451 434.2,443 432.4,434 431,429.5 430.1,428 428,427.5 424,428.1 416,430.5 412,431.1 403,430.8 397,431.6 395,432.7 392,435.7 386,443.8 381,448.1 377,450.3 374,451.4 370,452.3 366,452.6 361,452.1 356,450.7 352,448.6 348,445.6 344.7,442 341.7,437 340.2,433 339.3,428 339.4,422 341.4,415 344.2,410 348.9,405 354,401.7 360,399.5 365,398.8 373,399.1 379,398 380.4,397 384,393.3 387.4,388 390,384.9 393,382.1 397.7,379 402.5,375 403.6,374 403.8,373 403.3,372 399.1,368 393,363.4 389.8,360 386.5,355 384,348.9 381.4,345 380,343.7 378,343.2 373,343.4 368,344.7 364,345.2 357,344.7 353,343.6 349,341.7 346,339.8 343,337.2 340.3,334 338.4,331 336.6,327 335.5,323 335,319 335.1,315 335.9,311 337.2,307 339.3,303 341.6,300 345,296.6 348,294.5 352,292.4 355,291.4 360,290.5 364,290.4 369,291.2 373,292.5 377,294.6 381,297.7 385.5,303 390,312.6 392.4,316 394,317.1 400,317.2 410,315.4 414,315.5 419,316.4 424,316.3 426,315.9 428,314.4 431,310.1 433.1,305 435.5,301 438.1,298 442.4,294 445.3,290 446.2,288 446.3,286 445.2,281 442.7,275 441.4,270 441.1,266 441.2,260 440.4,255 439.9,254 438,252.9 433,252.2 425,252.4 419,251.4 414,249.3 409,245.9 404.6,241 401.3,235 399.6,228 399.8,221 401.4,215 403.4,211 406.3,207 410,203.5 415,200.4 420,198.6 425,197.7 432,197.6 435,196.7 437,195.1 439.5,191 442,188.1 444,186.7 446,186.1 448,186.2 450,187.2 451.5,189 452.2,191 451.6,195 448.2,202 447.9,205 448.8,208 452.4,215 453.6,219 454.2,223 454.3,230 455,234 455.7,236 457.3,237 462,237.6 469,237.2 474,237.5 478,238.5 483,240.6 488,244.1 491.8,248 494.5,252 496.6,257 497.7,262 497.9,267 497.2,272 495.5,277 492.7,282 490,285.3 484.9,290 482,294 481.2,296 482.1,302 485.4,311 487,321.7 487.9,325 488.8,326 490,326.3 496,325 501,323.1 505,322.1 509,321.7 516,321.9 522,320.8 524,319.4 527,316 532.1,308 537,303.4 540,301.5 544,299.7 548,298.6 552,298.2 557,298.5 562,299.7 566,301.5 571,305 574.7,309 577.7,314 579.4,319 580,323 579.9,329 578.3,335 575.1,341 571,345.6 565,349.6 560,351.5 555,352.3 547,352.3 542,353.1 540,354 536,358.4 532.7,364 530.5,367 527,370.4 522.2,374 518.3,378 517.8,379 518.6,381 521.3,384 527.1,389 530.7,393 532.5,396 535,401.5 538,405.8 539.3,407 541,407.6 545,407.6 555,405.8 562,406.3 566,407.4 570,409.2 573,411.1 576.4,414 579.6,418 581.4,421 582.6,424 583.7,428 584.2,433 583.9,437 582.8,442 581.6,445 579.2,449 577,451.7 574,454.5 571,456.7 567,458.7 564,459.7 559,460.5 555,460.6 550,459.8 546,458.4 542,456.3 539,454 536,451 533.7,448 530,440.3 528,437.4 526.9,436 525,434.8 519,434.7 514,435.8 509,436.4 505,436.2 500,435.3 495,435.3 493,435.6 491.1,437 488,441.6 485.7,447 483.2,451 480,454.6 475,459 471.6,464 471.5,466 472.4,470 475.5,477 476.8,482 477.2,487 476.6,494 476.8,500 477.2,501 479,501.9 485,502.2 492,501.7 497,502.4 502,504.3 506,506.8 510.3,511 513.4,516 514.6,519 515.5,523 515.6,529 514.9,533 513.4,537 511,541 508,544.5 504,547.6 500,549.6 496,550.8 488,551.9 485,553.4 482,556.2 478,565.8 477,567 475,568.3ZM874,208.4 873,208.6 871.1,208 869.6,206 869.4,205 870,203.1 872,201.6 873,201.4 874.9,202 876.4,204 876.6,205 876,206.9 874,208.4ZM174,382.1 171,382.3 168,381.8 165,380.7 162.3,379 160,377 158,374.5 155.4,369 154.8,365 155,361 156.1,357 158.7,351 159.2,348 159.1,345 157.9,339 156,332 156.6,329 158,327.7 160,327.7 162.1,329 170,340.9 173,344.3 175,345.8 181,349 184,351.4 186.7,355 188.4,359 189.1,363 188.8,367 187.7,371 186.2,374 183.8,377 181,379.4 178,381.1 174,382.1ZM445,410 448,409.4 454,407.3 459,406.5 464,406.7 471,407.9 475,407.8 477,407.4 478.7,406 481,402.9 484.3,396 487.7,391 491,387.8 496,384 499.9,380 500.3,379 499.4,377 495.7,373 489.9,368 487.4,365 485.5,362 483.2,356 482,347.5 480.5,342 480,341 479,340.4 472,341.8 467,343.8 462,345 456,345.1 449,344 444,344.2 442,344.9 438,349.8 434.6,357 431.6,361 428,364.4 422.6,368 417.2,373 417.2,374 417.9,375 422.3,379 429,384.2 433.5,390 435.8,395 438,405.2 440,409.9 442,410.4 445,410ZM760,420.1 759,420.1 758,419.4 752,410 750,407.8 748,406.7 740,404.4 736,402.1 731.9,398 729.1,393 728.1,389 727.8,385 728.4,381 729.9,377 731.6,374 734.3,371 737,368.9 741,366.9 745,365.8 749,365.6 753,366.3 756,367.3 760,369.6 762.7,372 765,375 767,379 768.2,385 767.5,391 765.5,396 760.9,402 759.6,405 759.6,408 760.7,418 760,420.1ZM135,582.1 132,582.3 129,581.9 126,580.8 123,579 120,575.8 117.1,570 114,565 113,564 111,563.5 106,563.9 97,565.7 91,565.4 87,564.4 83,562.7 79,560.2 75.5,557 72.4,553 70.3,549 68.6,543 68.3,538 68.9,533 70.4,528 73.2,523 77,518.7 81,515.6 86,513.2 91,511.9 96,511.5 102,512.3 106,513.6 111,516.4 115.1,520 118.8,525 121.4,531 122.4,536 122.7,543 124,548.3 125,549.3 126,549.7 132,551.5 137,552.4 140.5,554 144.1,557 146,559.8 147,562.2 147.8,566 147.6,569 146.9,572 145.5,575 143.1,578 141,579.7 138,581.2 135,582.1ZM337,585.1 333,585.2 329,584.6 325,583.1 321.5,581 318.3,578 316.1,575 314.2,571 313.2,567 313,563 313.6,559 315,555 317.5,551 320.3,548 324,545.4 328,543.7 332,542.8 336,542.8 340,543.5 344,545.1 348,547.7 351,550.8 353.1,554 354.7,558 355.5,562 355.5,566 354.7,570 352.5,576 351,578.6 349,580.5 346.3,582 341,584.2 337,585.1ZM729,560.1 728,560.5 726.2,560 724.8,558 725.4,555 727,553.4 729,553.4 729.9,554 730.5,555 730.6,558 730,559.3 729,560.1ZM725,618 720,618.2 715,617.3 710,615.4 706,612.8 702.1,609 699.3,605 697.5,601 696.3,596 696.3,590 697.3,585 699.4,580 701.4,577 705,573.2 709,570.4 713,568.5 718,567.2 723,566.9 727,567.3 733,569.5 737,571.9 740.5,575 743.6,579 745.6,583 747.2,589 747.4,594 746.7,599 744.8,604 742.3,608 739,611.6 735,614.6 731,616.6 725,618ZM381,626.1 377,626.8 372,626.7 367,625.6 363,623.7 359.1,621 356,617.7 353.6,614 351.7,609 350.9,604 351.2,599 352.2,595 355.2,588 357,585.5 359,584 365,581 369,579.6 373,579 378,579.1 383,580.3 387,582.2 390.9,585 394,588.4 396.3,592 398.2,597 398.8,601 398.7,606 397.5,611 395.6,615 392.7,619 389.4,622 385,624.7 381,626.1ZM827,631.1 823,631.7 818,631.4 814,630.4 809,628 805.2,625 802.6,622 800.3,618 798.6,613 798.1,609 798.4,604 799.5,600 801.4,596 804.5,592 808,588.9 812,586.6 816,585.2 821,584.5 825,584.7 829,585.7 834,588 837.9,591 840.6,594 843.5,599 844.8,603 845.3,608 844.8,613 843.6,617 841.5,621 838.2,625 835,627.6 831,629.8 827,631.1ZM669,617 663.5,616 658.9,613 656,608.8 655,606 654.7,603 655,599.7 656,596.8 657,595 659,592.6 663,589.9 665.4,589 669,588.6 672.4,589 675,589.9 679,592.8 682,597.2 683,600.8 683.1,603 683,605 682,608.4 679,612.8 676.2,615 674.3,616 669,617ZM272,675.1 268,675.4 264,674.9 257,672.5 250,670.9 243,671.7 235,671.5 232,670.9 230,669.9 228,668.3 226,666 225,664 224.2,659 225,654.8 227,651.5 230,648.9 239,645.6 246,644.2 252,640.6 257,636.7 261,634.7 265,633.7 269,633.4 273,633.9 277,635.3 280,637 282.6,639 286.5,644 288.8,650 289.2,653 289.1,657 287.5,663 285.8,666 283.4,669 281,671.1 278,673 272,675.1ZM462,685 458,685.2 454,684.6 450,683.2 446,680.8 442.9,678 440,674 438.3,670 437.4,666 437.2,662 437.8,658 439.2,654 441.6,650 444.3,647 448,644.3 452,642.4 456,641.4 460,641.2 464,641.7 468,643 472,645.3 475.1,648 478.1,652 480,656 481,660 481.2,664 480.7,668 479.4,672 477,676.1 474,679.5 470.6,682 466.3,684 462,685ZM368,666.3 365,666.8 363,666.8 360,666.1 358,665 355,662.2 353,658.2 352.7,654 353,652 354,649.5 356.9,646 360.4,644 365,643.4 369,644.3 373,647 375.4,651 376,653 376.1,656 375,660.3 372.2,664 368,666.3ZM463,100.1 459,100.4 457,100 454.6,99 451.2,96 449.1,92 448.8,88 450,83.6 452.9,80 457,77.8 461,77.3 464,77.9 466,78.8 468,80.3 469.6,82 471.5,86 471.8,88 471.7,91 470.1,95 467,98.3 463,100.1ZM651,107.1 647,107.1 644,105.9 641.1,103 639.7,100 639.6,96 641,92.3 643.1,90 645,88.8 647,88.1 650,88.1 653,89.3 655.4,92 656.8,95 657,99 656,103.2 654,105.7 651,107.1ZM102,163.2 98,163.6 94,163.2 90,162 86.4,160 83,157.1 81,154.5 79.1,151 78,147 77.6,143 78.1,139 79.4,135 81.1,132 83.5,129 87,126.2 90,124.6 94,123.4 98,123 102,123.4 106,124.7 109,126.3 112.3,129 114.7,132 116.4,135 117.7,139 118.2,143 117.8,147 116.7,151 115,154.2 112.9,157 109.4,160 106,161.9 102,163.2ZM203,181.1 199,181.8 194,181.7 190,180.8 185.9,179 182,176.2 179,173 176.5,169 175,165 174.3,161 174.4,156 175.4,152 177.1,148 180,144 183,141.1 187,138.6 191,137.1 195,136.4 200,136.5 204,137.4 208,139.2 212,142 214.9,145 217.4,149 218.9,153 219.7,157 219.6,162 218.7,166 217,170 214.2,174 211,177.1 207,179.6 203,181.1ZM546,160.1 541,159.9 536.9,158 534,154.9 533,153 532.2,150 532.4,146 534.2,142 537.2,139 539,138 542,137.1 546,137.1 550.4,139 553.4,142 555.2,146 555.4,149 555.2,151 553.5,155 550.7,158 549,159.1 546,160.1ZM252,155.1 249,155.6 246,154.9 244,153.6 242.1,151 241.4,148 241.9,145 244,142 246,140.7 249,140 252,140.6 254.4,142 256.4,145 257,148 256.3,151 255,153 252,155.1ZM790,195.3 787,195.6 783,194.5 780.2,192 778.7,189 778.4,186 779.5,182 782,179.2 785,177.7 788,177.4 792,178.5 794.8,181 796.3,184 796.6,187 795.7,191 794,193.2 790,195.3ZM589,199.2 585,199.9 581,199 579,197.9 577,196 575,192.3 574.6,188 575.9,184 578.4,181 582,179 586,178.6 590,179.7 593,181.9 595,185 595.9,189 595,193.4 592.5,197 589,199.2ZM429,249.1 423,248.8 418,247.5 413,244.7 408,240 405,235 403.3,230 402.9,224 403.9,218 405.6,214 408,210.2 411,207.1 414,204.8 418,202.7 422,201.5 426,201.1 433,201 437.2,200 439.5,198 443,192.4 444,191.6 446,191.2 447.3,192 447.8,193 447.8,195 444.5,201 443.9,204 445,208 449.2,216 450.6,221 450.9,227 449.4,235 448.2,238 446.3,241 442,245 437,247.4 429,249.1ZM826,237.1 822,237 818,236.3 814,234.7 810,232 807,228.9 804.5,225 803,221 802.2,217 802.2,213 802.8,208 804.1,204 806,201 809,198 812,196.1 818,193.9 822,193.2 827,193.2 831,194.1 835,195.9 838.1,198 841.2,201 843.8,205 845.4,209 846.2,213 846.2,217 845.5,221 843.9,225 841.3,229 838.4,232 835,234.3 830,236.4 826,237.1ZM413,367.1 407,366.8 401,364.6 396,361.5 391.7,357 388.9,352 386.7,345 386.1,340 386,331.3 381.6,335 376,338.3 370,340.6 365,341.7 360,341.7 355,340.7 351,339 347,336.3 344,333.3 341.7,330 339.8,326 338.7,322 338.3,318 338.6,314 339.6,310 341.4,306 343.4,303 346,300.2 349,297.8 352,296.1 356,294.6 359,294 363,293.7 367,294.2 372,295.7 376,298 379.6,301 382.8,305 384.8,309 386.8,316 387.5,323 387.4,328 388,328.9 391.4,326 397,322.5 404,319.8 409,318.8 413,318.8 417,319.5 422,320.8 431,324.2 431.7,323 433.2,315 434.7,310 436.4,306 438,303.3 440,300.8 443,298 454.3,290 454.4,289 453.9,288 449.9,282 446.7,276 445.6,273 444.7,269 444.5,264 445.4,258 446.6,254 448.7,250 451.2,247 455,244.2 459,242.4 465,241 470,240.5 474,241 478,242 482,243.9 487.3,248 491.2,253 493.7,259 494.6,266 494.2,270 493.1,274 491.3,278 489.3,281 485,285.3 481,288.3 473.7,293 473.1,294 480.5,307 482.4,313 482.8,318 482.3,323 481.3,327 479.9,330 476.8,334 472,337.7 467,340.2 462,341.6 457,341.8 453,341.3 447,339.7 438,336.1 437,337.8 435.7,345 433.7,351 431.8,355 429.7,358 426.8,361 423,363.7 417,366.3 413,367.1ZM514,373.2 511,373.7 507,373.6 501,371.7 497,369.5 494,367.3 491.6,365 489.4,362 487.8,359 486.4,355 485.7,348 486.2,343 486.9,340 488.3,337 490.3,334 493,331.4 497,328.7 501,326.7 505,325.5 512,325.2 524,327.1 526,327 527,325.6 531.6,315 534,311 536,308.7 539,306.1 545,302.9 551,301.6 557,301.9 563,303.7 568,306.9 571.2,310 573.9,314 575.6,318 576.7,323 576.6,328 575.8,332 574.2,336 571.7,340 569,342.9 566,345.2 562,347.3 558,348.5 551,349 545,348.3 539,347.1 537,347.2 536,348.6 533.5,355 531.1,360 527.8,365 525,367.7 522,369.8 518,371.8 514,373.2ZM175,375.1 171,375.7 168,374.8 164.6,372 162.6,368 162.1,364 163.1,360 166,355.7 169,353.8 173,354.1 177,355.8 180,358.9 181.4,362 181.7,366 180.5,370 178,373.3 175,375.1ZM751,398.2 746,398.3 742,397 740,395.7 738,393.6 736.4,391 735.7,389 735.3,384 736,381.2 737.1,379 738.5,377 740.8,375 745,373.1 750,372.9 753,373.8 755,374.9 758.3,378 759.5,380 760.5,383 760.6,388 759,392.2 755.6,396 753,397.5 751,398.2ZM369,449.1 366,449.3 362,448.9 358,447.8 355,446.5 352,444.6 349.1,442 345.4,437 343.7,433 342.9,430 342.6,427 342.7,423 343.5,419 344.6,416 346.3,413 348.5,410 351.8,407 355,404.9 358,403.6 362,402.5 368,402.2 382,404.4 383,403.8 388.8,392 392,387.6 397,383.4 404,380.3 410,379.4 415,380.1 421,382.5 426,386 428.8,389 431.3,393 432.9,397 433.8,402 433.8,408 433.1,412 431.4,416 429,419.4 426,422.1 422,424.6 418,426.4 414,427.5 407,427.7 395,425.4 393,425.5 392,426.6 389,433 386.2,438 383,442.1 380,444.7 377,446.6 373,448.2 369,449.1ZM455,510.2 450,510.8 445,510.3 440,508.7 436,506.4 432.1,503 429.1,499 426.9,494 425.9,489 425.8,485 426.7,480 428.3,476 430.8,472 435,467.7 440,464.2 447.8,460 448.3,459 442.9,452 439.2,446 437.4,442 436.4,437 436.4,430 437.4,425 440,420 444,415.9 448,413.4 452,411.5 456,410.3 461,409.8 466,410.4 471,411.8 481,416.2 482,416.2 483.8,407 485.7,401 487.5,397 490,393.5 494,389.7 499,386.8 504,384.9 509,384.4 514,385.2 519,387.4 524,390.7 527.2,394 530.3,399 532.4,405 534.5,417 535,417.3 543,412.7 549,410.4 553,409.4 558,409.2 563,410 568,411.9 572.5,415 576.2,419 579.4,425 580.8,431 580.6,437 578.8,443 575.8,448 571,452.6 565,455.8 559,457.2 553,457 548,455.6 543,452.9 539,449.4 536.4,446 534.4,442 532.2,435 531,425.4 530.1,425 521,430.1 514,432.4 510,433 506,432.9 502,432.2 497,430.7 489,427.1 487.7,427 487,428.9 485.7,437 484.2,442 482.4,446 480.5,449 478,451.9 475,454.4 470,457.8 462.2,462 462.3,463 468.5,471 472.2,478 473.7,484 473.6,490 471.4,498 469.8,501 468,503.4 466,505.3 463,507.3 455,510.2ZM480,551 479,551.2 478.1,550 477.8,547 477.1,545 471.7,536 469.9,531 469.5,528 469.6,524 470.4,520 471.8,516 473.5,513 476,510.2 479,508.1 482,506.8 487,505.4 491,505.1 495,505.4 499,506.6 503,508.8 506,511.3 508.3,514 510.6,518 511.9,522 512.4,526 511.9,531 510.6,535 509,538 506.7,541 504,543.5 501,545.4 495,547.6 484,548.9 480,551ZM98,562.1 93,562.1 89,561.4 85,559.8 80.5,557 77.4,554 74.7,550 72.9,546 71.9,541 71.9,536 72.7,532 74.3,528 77,523.7 80,520.6 84,517.9 88,516.1 93,515.1 98,515.1 102,515.9 106,517.5 110,520 113.2,523 116,527 117.8,531 118.9,536 118.9,541 118,547 116.5,551 114.6,554 111.4,557 108,559 102,561.3 98,562.1ZM335,577 330,576.3 326,574 324,572 322.7,570 321.9,568 321.3,565 321.9,560 323.3,557 324.9,555 329,552.1 331,551.4 334,551 339,551.8 341.3,553 343.7,555 346.3,559 347.3,564 346.3,569 343.7,573 340,575.7 338,576.5 335,577ZM474,563 473,563 472.3,562 472.5,560 474,558 475,557.3 476,557.3 476.2,559 475.8,561 475,562.4 474,563ZM134,569.3 132,569.7 131,569.3 130,568.1 130,566 131,564.7 133,564.3 134,564.7 135,565.9 135,568 134,569.3ZM727,613 723,613.6 719,613.5 715,612.5 711,610.7 708,608.5 705,605.3 703,602 701.4,598 700.8,594 700.9,590 701.8,586 703.6,582 706,578.7 709,575.9 713,573.5 717,572.1 721,571.6 725,571.8 729,572.8 733,574.8 736,577.1 739,580.5 741,584 742.3,588 742.8,592 742.6,596 741.5,600 739.5,604 737,607.2 734,609.8 731,611.5 727,613ZM380,618.1 377,618.8 374,618.9 371,618.4 368,617.4 365,615.5 363,613.6 361.1,611 359.7,608 359,605 358.9,602 359.4,599 360.4,596 362,593.4 364.2,591 367,589 370,587.6 373,587 376,586.9 379,587.4 382,588.5 385,590.5 387,592.4 388.8,595 390.2,598 390.8,601 390.9,604 390.4,607 389.3,610 387.3,613 385.4,615 383,616.7 380,618.1ZM825,627.1 821,627.4 818,627.1 814,625.8 811,624.2 808,621.7 805.8,619 804.1,616 802.8,612 802.4,608 802.8,604 804.2,600 805.9,597 808,594.5 811,592 814,590.4 818,589.1 822,588.8 826,589.3 830,590.7 833,592.4 835.9,595 838.2,598 839.7,601 840.8,605 841,609 840.6,612 839.3,616 837.6,619 835.1,622 832,624.4 828.9,626 825,627.1ZM271,667.1 268,667.4 265,667 254,662.5 250,662.4 249,662 248,660.5 247.2,658 247.1,655 247.7,653 249,652.1 252,651.2 260.5,644 264,642.1 267,641.4 270,641.5 273,642.3 275,643.2 278,645.7 280.1,649 281.1,652 281.2,656 280,660 278,663.1 275,665.6 271,667.1ZM461,677.2 456,676.9 453,675.8 451,674.7 449,672.9 447,670.2 446,668 445.2,665 445.5,660 446.5,657 447.7,655 449.5,653 452,651.1 457,649.3 460,649.1 463,649.6 467.7,652 469.9,654 471.3,656 472.3,658 473.1,661 473.3,664 472.8,667 471.5,670 470.2,672 468.2,674 466,675.5 461,677.2ZM101,160.1 97,160.4 94,159.9 91,158.9 88,157.2 85.5,155 83.2,152 81.8,149 81,146 80.9,142 81.4,139 82.5,136 84,133.4 86.1,131 89,128.7 92,127.3 95,126.5 98,126.2 101,126.5 104,127.3 107.2,129 110,131.3 112.2,134 113.8,137 114.7,140 115,144 114.6,147 113.6,150 112,153 110,155.3 107,157.8 104,159.3 101,160.1ZM203,178 199,178.8 195,178.8 191,178 188,176.8 185,174.9 181.9,172 179.8,169 178,165 177.2,161 177.3,157 178.1,153 179.4,150 181.3,147 184.1,144 187,142 191,140.2 195,139.4 199,139.4 203,140.2 206,141.4 209,143.3 212,146.1 214.1,149 215.9,153 216.7,157 216.8,161 216,165 214.7,168 212.9,171 210,174.1 207,176.2 203,178ZM829,234 825,234.6 821,234.4 817,233.3 814,231.8 811,229.5 808.7,227 806.8,224 805.3,220 804.7,216 804.8,213 805.5,209 807.1,205 809,202.2 811.4,200 815,197.8 819,196.3 823,195.6 827,195.8 831,196.8 834,198.2 837,200.3 839.5,203 841.5,206 843.1,210 843.7,214 843.5,218 842.5,222 841,225 838.9,228 836,230.7 833,232.5 829,234ZM431,246.1 426,246.5 421,245.7 416,243.5 411.5,240 408.5,236 406.3,231 405.5,226 405.9,221 407.5,216 410,212 413,208.8 417,206.1 420,204.8 424,203.9 439,203.2 440,203.7 441,205 447.1,218 448.2,223 447.9,229 446,235.3 442.9,240 440.7,242 438,243.7 431,246.1ZM469,290.1 465,290.3 462,289.4 458,286.8 454,282.8 451,278.5 448.6,274 447.4,270 447,265 447.5,261 449,256 451.1,252 453.7,249 457,246.6 461,244.7 466,243.4 470,243.1 474,243.6 478.5,245 482.1,247 485.7,250 488.1,253 490.3,257 491.5,261 492,266 491.6,270 490.4,274 488.3,278 485.9,281 483,283.6 478,286.9 473,289 469,290.1ZM461,339.1 457,339.3 452,338.4 446,336.2 442,333.6 439.1,331 437.2,328 435.9,324 435.6,319 436.1,315 437.8,309 439.9,305 443,301.4 448,297.5 452,295.4 457,293.6 462,293.1 465,293.7 468,295.4 471,297.9 474.6,302 477.7,307 479,310 480,314 480.2,318 479.7,322 478.5,326 477,329 474.7,332 471.3,335 468,337 465,338.3 461,339.1ZM366,339.1 362,339.4 357,338.7 353,337.3 350,335.5 347.1,333 344.6,330 342.4,326 341.2,322 340.8,318 341.1,314 342.3,310 344.3,306 347,302.7 351,299.4 355,297.5 359,296.5 364,296.2 368,296.9 372,298.4 376,301 379,304 381.7,308 383.2,312 384,316 384.4,320 383.9,324 382.5,328 380.5,331 378,333.6 375,335.7 370,338 366,339.1ZM514,370.2 508,370.6 505,370.1 501,368.7 498,367.1 495.3,365 491.2,360 488.8,354 488.3,351 488.3,347 489.1,343 490.2,340 493.4,335 496.7,332 500,329.9 504,328.4 508,327.7 512,327.7 517,328.5 521,329.7 527,332.3 528,332.4 529,331.9 529.9,330 531.7,321 535,314 537.3,311 540,308.5 543,306.5 546,305.2 551,304.1 557,304.4 562,306 567,309.3 570,312.5 572.1,316 573.6,320 574.2,324 574.1,328 573.2,332 571.4,336 569,339.3 566.2,342 563,344.1 559,345.7 555,346.5 551,346.5 546,345.7 542,344.5 536,342 534,342.3 533.1,344 532.1,350 531,354 528.8,359 527,361.8 524.1,365 521,367.4 518,368.9 514,370.2ZM414,364.1 410,364.3 405,363.4 401,361.8 397,359 394.2,356 392,352.6 390.5,349 389.5,344 389.2,340 389.8,336 390.9,333 393,329.6 395.6,327 399,324.8 404,322.5 408,321.5 412,321.3 416,321.9 421,323.5 425,325.4 428.4,328 430.9,331 432.4,334 433,337 433.2,341 432.7,345 430.9,351 428.8,355 426,358.3 422.5,361 418,363.1 414,364.1ZM750,390.3 748,390.8 746,390.3 744.2,389 743.5,388 742.9,386 743.2,384 744.5,382 746,380.9 748,380.5 750,380.9 751.5,382 752.8,384 753.1,386 752.5,388 751.8,389 750,390.3ZM371,446.2 368,446.7 364,446.7 358,445.2 355,443.6 352,441.4 349.8,439 347.7,436 345.5,430 345.1,427 345.2,423 346.1,419 347.4,416 351,411 354,408.4 357,406.7 361,405.3 365,404.7 368,404.7 373,405.5 376,406.3 383,409.3 385,409.1 386,407.9 388.7,398 392,391.8 394.2,389 397,386.6 400,384.7 403,383.4 409,382.3 414,382.7 420,384.9 424.3,388 427,391 429.4,395 430.7,399 431.3,403 431.1,407 430,411.6 428.4,415 426.1,418 422.7,421 419,423.2 415,424.6 411,425.2 407,425.1 402,424.2 393,420.7 391,420.4 390,420.9 389.4,422 386.5,432 382.4,439 380,441.5 377,443.7 374,445.2 371,446.2ZM512,430.2 508,430.5 504,430 498,428.1 495,426.6 491.6,424 488.9,421 487.4,418 486.6,415 486.3,410 487,406 488.5,401 491,396.4 494,393.1 497,390.8 501,388.8 506,387.6 510,387.5 514,388.2 518,389.8 522,392.4 525,395.4 527.4,399 529,403 530.2,408 530.4,412 529.8,416 528.8,419 526.8,422 524,424.8 521,426.9 516,429.1 512,430.2ZM562,454.1 558,454.7 553,454.4 549,453.3 545,451.2 542,448.9 539,445.4 537.1,442 535.8,438 534.9,434 534.8,430 535.4,426 537.1,422 539.4,419 543,416 546,414.4 551,412.4 556,411.6 560,411.9 564,412.9 568,414.8 571,417 574,420.2 576.3,424 577.7,428 578.3,432 578.2,436 577.3,440 575.5,444 573,447.4 570,450.2 566,452.7 562,454.1ZM464,457.1 460,457.8 456,457.6 452,456.1 448,453.3 445,450.2 441.5,445 439.8,441 438.9,437 438.8,433 439.6,428 441.1,424 443,421 446,418 450,415.2 454,413.4 458,412.5 462,412.4 466,413 471.8,415 475,416.7 477.9,419 480.7,422 482.2,425 483.2,429 483.4,433 482.6,438 481.1,443 478.9,447 476.4,450 473,452.7 468,455.7 464,457.1ZM452,508.1 447,508 443,507.1 439,505.3 435.8,503 432.9,500 430.4,496 429,492 428.3,487 428.8,482 430.1,478 432.4,474 435,471.1 438,468.7 443,465.8 447,464.4 452,463.7 455,464.1 458,465.3 462,468 465,471 468,475.2 469.9,479 471,483 471.3,487 470.9,491 470,494 468.2,498 466,501 463,503.8 460,505.7 456,507.3 452,508.1ZM494,545.1 490,545.5 484,545.4 481,544.2 475,536.7 473.2,533 472.3,530 472,526 472.6,522 474,518 475.8,515 478,512.5 481,510.4 484,508.9 488,507.8 492,507.7 495,508.1 499,509.4 502,511.2 505,513.9 507.2,517 508.6,520 509.6,524 509.7,528 509.2,531 508,534.5 506,537.8 504,540.1 501,542.4 498,544 494,545.1ZM98,559.1 94,559.2 90,558.5 86,557 82.9,555 80,552.3 77.6,549 75.8,545 74.9,541 74.8,537 75.6,533 77.1,529 79.1,526 81.9,523 85,520.8 89,519 93,518.1 97,518 101,518.8 105,520.3 108,522.3 110.9,525 113.1,528 114.9,532 115.9,536 116,540 115.3,544 114,548 112,551.3 109.4,554 106,556.3 102,558.1 98,559.1ZM337,569.1 335,569.7 333,569.6 331,568.7 329.4,567 328.6,565 328.6,563 329.4,561 331.5,559 334,558.2 336,558.5 338,559.6 339.2,561 340,563 340,565 339,567.3 337,569.1ZM725,609 722,609.3 719,609.1 716,608.3 713,606.8 710,604.5 708,602.1 706.3,599 705.4,596 705.1,592 705.5,589 706.4,586 708.1,583 710,580.7 713,578.4 716,576.9 719,576.1 723,575.9 726,576.4 729,577.5 731.5,579 734,581.1 736.2,584 737.6,587 738.3,590 738.5,593 738.2,596 737.3,599 735.6,602 734,604.1 731,606.6 728,608.1 725,609ZM825,623.1 822,623.4 819,623.2 814,621.4 811,619.1 809.2,617 806.9,612 806.4,609 806.5,606 807.2,603 808.7,600 811,597.1 813,595.5 818,593.2 821,592.8 824,592.9 827,593.7 830,595.2 832.3,597 834.1,599 835.8,602 836.7,605 837,608 836.8,611 834.9,616 833,618.5 831,620.3 828,622.1 825,623.1ZM377,611.2 373,611.3 370,610 367.9,608 366.6,605 366.3,603 366.5,601 367.8,598 370,595.8 373,594.5 375,594.3 377,594.6 380,595.9 382,598 383.3,601 383.2,605 382,607.8 379.8,610 377,611.2ZM269,660.1 267,660 264.8,659 263.1,657 262.6,655 262.7,653 264,650.6 266,649.1 268,648.7 270,648.9 272,650 273.5,652 274.1,654 273.8,656 272.8,658 271,659.5 269,660.1ZM462,670.3 459,670.8 456,670.1 454,668.7 452.1,666 451.6,663 452.3,660 454,657.7 456.8,656 459,655.6 462,656.1 464.7,658 466.1,660 466.8,663 466.3,666 465,668.1 462,670.3ZM100,157 97,157.1 94,156.6 91,155.3 89.1,154 85.8,150 84.1,145 84.4,140 85.5,137 86.8,135 88.6,133 91,131.3 96,129.6 101,129.8 104,130.8 106,132 108,133.8 109.7,136 110.7,138 111.6,141 111.8,144 111.3,147 109,151.6 107,153.8 105,155.2 100,157ZM198,176 195,175.9 192,175.3 189,174 186,172 184,169.9 182,167 180.8,164 180.1,160 180.2,157 180.9,154 182.1,151 184.2,148 186.3,146 189.4,144 193,142.6 196,142.2 199,142.3 202,142.9 205,144.2 208,146.2 210,148.3 212,151.3 213.4,155 213.9,158 213.8,161 213.2,164 212,167 210,170 208,172 205,174 202,175.3 198,176ZM827,232.2 823,232.4 820,231.9 817,230.8 814,229.1 811.6,227 809.4,224 807.9,221 807.1,218 806.9,214 807.4,211 808.4,208 810.1,205 812,202.8 815,200.4 818,198.9 821,198.1 825,197.8 828,198.2 831,199.2 834,200.8 836.6,203 838.9,206 840.4,209 841.2,212 841.5,216 841.1,219 840.1,222 838.4,225 836,227.8 833,230 830,231.4 827,232.2ZM431,243.1 426,243.6 422,242.9 418,241.3 414.7,239 412,236 409.8,232 408.7,228 408.5,223 409.5,219 411.4,215 413.9,212 417,209.5 420,208 424,206.9 436,206.4 437.8,207 439,208.3 444,218 445.3,223 445.1,228 443.6,233 442,235.8 440.2,238 436,241.2 431,243.1ZM473,286 469,286.7 466,286.6 463,285.8 459,283.6 456,281 452.4,276 450.9,273 449.8,269 449.5,265 450,261 451.4,257 453.1,254 455.7,251 458.2,249 462,247 466,245.9 470,245.6 474,246.1 478,247.5 481,249.2 484,251.8 486.5,255 488,258 489.2,262 489.5,266 489,270 487.7,274 486,277 484,279.4 481,282 477,284.4 473,286ZM459,337 455,336.8 452,336.1 447.2,334 444,331.8 441.4,329 439.6,326 438.6,323 438.1,319 438.7,314 439.8,310 441.3,307 444,303.6 447,301 452,298.1 456,296.9 460,296.5 464,297.2 467,298.6 470,300.7 472.3,303 475.1,307 476.6,310 477.7,314 477.9,318 477.4,322 476.4,325 474.8,328 472,331.4 469,333.8 466,335.5 463,336.5 459,337ZM366,337.1 362,337.4 358,336.9 354,335.5 351,333.8 348,331.1 345.6,328 344.1,325 343,321 342.8,317 343.4,313 344.9,309 346.7,306 349,303.5 352,301.2 355,299.6 359,298.5 363,298.2 367,298.7 371,300.2 374,302 376.4,304 378.8,307 380.4,310 381.7,314 382.1,318 381.9,322 380.7,326 379.1,329 376.4,332 373.6,334 370,335.9 366,337.1ZM557,344 554,344.4 550,344.2 546,343.4 542.4,342 539,340 536.7,338 534.5,335 533.4,332 533.1,328 533.6,323 535.3,318 536.9,315 539.2,312 542,309.6 545,307.9 549,306.6 552,306.2 556,306.4 560,307.5 563.1,309 566,311.2 568.5,314 570.3,317 571.7,321 572.2,325 571.8,329 570.5,333 569,335.8 567,338.4 564,341 561,342.7 557,344ZM416,361.1 413,361.7 409,361.7 405,360.8 402,359.4 399,357.4 396.6,355 394.5,352 392.9,348 392.1,344 392.1,340 392.5,337 394,333.4 396,330.6 399,328 403,325.6 406,324.5 410,323.9 414,324 417.7,325 422,326.9 425,329 427,331.1 428.8,334 429.9,337 430.4,340 430.2,344 429.3,348 427.7,352 425.6,355 423,357.6 420,359.6 416,361.1ZM511,368 507,367.9 504,367.2 501,366 498,364 495,361.1 492.9,358 491.7,355 490.8,351 490.8,347 491.4,344 493,340.1 495.1,337 498,334.2 501,332.2 504,331 508,330.2 512,330.3 517,331.2 520,332.3 523.1,334 525.7,336 527.4,338 528.9,341 529.5,344 529.5,348 528.8,352 527,357 524.5,361 521.4,364 518.3,366 515,367.3 511,368ZM415,422 412,422.6 408,422.7 400,420.7 396,418.6 393,416.2 391.3,414 390.1,411 389.6,407 390.2,402 391.2,399 393.6,394 395.8,391 398,388.9 401,387 405,385.4 408,384.9 412,385 416,385.9 419,387.2 422,389.3 424.7,392 426.6,395 428.2,399 428.7,402 428.6,406 427.7,410 426.4,413 424.3,416 422,418.3 419,420.4 415,422ZM514,427.1 510,427.9 506,427.8 502,426.9 498,425.1 495,423.1 492.8,421 490.8,418 489.7,415 489.2,412 489.3,408 490.1,404 491.7,400 494,396.7 496.8,394 500,392 503,390.8 507,390.1 511,390.2 515,391.2 518,392.6 521,394.8 523.1,397 525.1,400 526.7,404 527.4,408 527.5,412 527,415 525.8,418 524,420.7 521.7,423 518,425.4 514,427.1ZM371,444 368,444.6 364,444.6 360,443.7 357,442.4 353.6,440 351,437.2 349,434 347.9,431 347.2,427 347.3,423 348.3,419 349.8,416 352,413 355,410.3 358,408.5 361,407.4 364,406.8 368,406.8 373,407.8 376,408.9 379.8,411 382.2,413 384.5,416 385.7,419 386.1,423 385.7,427 384.5,431 382.6,435 380.5,438 378,440.5 375,442.5 371,444ZM561,452.2 557,452.6 553,452.2 549,451 546,449.3 543.1,447 540.7,444 539,441 537.8,437 537.2,433 537.4,429 538.2,426 540,422.4 542,420 545,417.6 549,415.4 553,414.2 557,413.8 561,414.2 564,415.2 567.5,417 570,419 572.7,422 574.4,425 575.8,429 576.2,433 575.8,437 574.6,441 573,443.9 571,446.4 568,449.1 565,450.8 561,452.2ZM465,454.1 461,454.8 457,454.6 454,453.7 450.7,452 447.3,449 444.1,445 442.6,442 441.4,438 441,434 441.5,430 442.9,426 444.6,423 447,420.3 450,417.9 453,416.2 457,415 461,414.6 465,415.1 468,416 472.2,418 475,420 477.8,423 479.5,426 480.4,429 480.8,433 480.2,438 479,442 477.5,445 475,448.1 472,450.7 465,454.1ZM455,505.1 451,505.8 447,505.7 443,504.6 440,503.2 437,501 434.3,498 432.5,495 431.1,491 430.6,487 431,483 432.3,479 433.9,476 436.4,473 439,470.9 443,468.6 447,467.2 451,466.8 454,467.2 457,468.1 460,469.9 463,472.6 465.7,476 467.3,479 468.6,483 468.9,486 468.7,490 467.5,494 466,496.9 464,499.6 461.3,502 458,504 455,505.1ZM496,542.1 493,542.8 489,542.9 486,542.5 483,541.4 481,540 478,536.7 476.3,534 475.1,531 474.6,528 474.6,525 475.1,522 476.3,519 478,516.4 480.3,514 483,512.1 486,510.9 489,510.2 493,510.2 496,510.9 499,512.3 501.5,514 504,516.7 505.5,519 506.7,522 507.2,525 507.2,528 506.7,531 505.5,534 503.5,537 501.5,539 499,540.7 496,542.1ZM98,556 94,556.1 91,555.6 88,554.6 85,552.8 82.9,551 80.5,548 79,545 78,541 77.9,537 78.4,534 79.5,531 81.4,528 84,525.2 87,523.1 90,521.9 93,521.2 97,521.1 100,521.6 103,522.7 106,524.6 108.6,527 110.7,530 112.1,533 112.8,536 112.9,540 112.4,543 111.4,546 109.6,549 107,551.8 104,553.9 101,555.3 98,556ZM722,605 719,604.7 717,604 713,601.3 710.6,598 709.9,596 709.4,593 709.7,590 710.3,588 713,583.9 717,581.2 719,580.5 722,580.2 725,580.6 727,581.3 730.7,584 733.3,588 733.9,590 734.2,593 733.4,597 730.9,601 727,603.9 725,604.6 722,605ZM824,619.2 820,619.3 816,617.9 812.7,615 810.7,611 810.4,609 810.5,606 812,602.2 815,598.9 819,597.1 821,596.7 824,597 828,598.6 831.3,602 832.9,606 833,609 832.7,611 831,614.6 828,617.6 824,619.2ZM102,153.1 98,154 94,153.2 90.5,151 88.9,149 87.9,147 87.2,143 88.1,139 90.1,136 92,134.4 94,133.4 98,132.6 102,133.5 105.7,136 107.7,139 108.6,143 107.9,147 106.9,149 105.3,151 102,153.1ZM198,173.1 193,172.5 190,171.2 188,169.8 186,167.8 184.3,165 183,160 183.6,155 184.9,152 186.3,150 188.5,148 191,146.4 196,145.1 201,145.7 204,147 206,148.4 208,150.4 209.6,153 211,158 210.5,163 209.2,166 207.8,168 205.8,170 203,171.8 198,173.1ZM826,230.1 823,230.2 820,229.6 817,228.4 815,227.1 812.8,225 811,222.5 809.9,220 809.2,217 809.1,214 809.6,211 810.8,208 812.1,206 814,203.9 816.6,202 819,200.9 822,200.1 825,200 828,200.5 831,201.6 833.3,203 837,207 838.4,210 839.2,213 839.3,216 838.8,219 837.7,222 836,224.6 832,228.1 829,229.5 826,230.1ZM431,240 428,240.5 425,240.5 422,239.8 419,238.4 416,236.1 414.3,234 411.9,229 411.5,226 411.6,223 412.3,220 413.7,217 416,214.1 418,212.5 423,210.1 426,209.6 429,209.7 433,210.3 435,211.1 437,212.7 439,215.2 440.7,218 441.8,221 442.3,224 442.3,227 441.6,230 440.2,233 438,235.9 436,237.6 431,240ZM473,283.2 470,283.7 466,283.5 463,282.6 460.1,281 457,278.1 454.6,275 453.1,272 452.2,269 451.9,265 452.3,262 453.2,259 454.8,256 457,253.2 459.7,251 463,249.2 466,248.4 469,248 473,248.4 476,249.2 479,250.8 481.8,253 484,255.6 485.8,259 486.7,262 487.1,265 486.8,269 485.9,272 484.4,275 482,278 480,279.7 477,281.5 473,283.2ZM463,334.2 460,334.8 456,334.7 452,333.7 449,332.3 446,330.2 443.8,328 442,325 441,322 440.6,318 441,314 441.8,311 443.3,308 445.7,305 448,303 452,300.8 456,299.4 459,299.2 462,299.5 465,300.5 468,302.2 470.8,305 473.1,308 474.6,311 475.4,314 475.7,318 475.3,321 474.4,324 473,326.7 471.3,329 469,331.1 466,333 463,334.2ZM366,335.2 363,335.6 359,335.2 355,334 352,332.2 349.5,330 347.2,327 345.7,324 344.9,321 344.6,317 345,314 346,311 347.6,308 350,305.1 352.6,303 356,301.2 359,300.4 363,300 366,300.4 369,301.3 372,302.8 374.7,305 377,307.7 378.8,311 379.8,314 380.2,317 380,321 379.3,324 377.9,327 375.5,330 373,332.1 369.7,334 366,335.2ZM556,342.2 553,342.4 550,342.2 546,341.2 543,339.8 540.4,338 538,335.4 536.6,333 535.7,330 535.4,326 535.8,323 537.1,319 538.6,316 541,313.1 543.6,311 547,309.3 550,308.4 554,308.2 557,308.6 560,309.7 563,311.4 565,313.1 567.4,316 568.9,319 569.8,322 570.1,326 569.7,329 568.8,332 567.1,335 565,337.5 562,339.9 559,341.3 556,342.2ZM414,359 411,359.3 408,359 405,358.1 402,356.5 399,354 397.4,352 395.8,349 394.9,346 394.6,343 394.8,340 395.6,337 397,334 399.6,331 402,329.1 405,327.5 408,326.6 411,326.3 414,326.6 417,327.4 420.2,329 422.9,331 425,333.3 426.5,336 427.4,339 427.6,342 427.3,346 426.4,349 424.8,352 423,354.2 420,356.7 417,358.2 414,359ZM513,365.2 510,365.6 507,365.3 504,364.6 501,363.1 498.3,361 496.5,359 494.7,356 493.7,353 493.3,350 493.5,346 494.4,343 496,340 498,337.5 500,335.8 503,334.1 506,333.1 509,332.6 512,332.8 516,333.7 519.1,335 522,337 523.9,339 525.2,341 526.3,344 526.7,347 526.5,350 525.1,355 523.6,358 521.1,361 519,362.7 516,364.3 513,365.2ZM412,420.1 409,420.3 406,419.8 402,418.6 398.9,417 396.5,415 394.9,413 393.4,410 392.8,407 392.7,404 393.3,401 394.8,397 396.6,394 399,391.4 402,389.3 405,388 408,387.4 411,387.4 414,387.9 417,389 420,390.9 422.2,393 424.3,396 425.6,399 426.2,402 426.2,405 425.7,408 424.6,411 422.7,414 420.9,416 418,418.1 415,419.4 412,420.1ZM512,425.1 509,425.5 506,425.3 503,424.6 499.7,423 496.9,421 494.9,419 493.1,416 492.2,413 491.9,410 492.2,406 493.1,403 494.6,400 497,397.1 499,395.5 502,393.8 505,392.9 509,392.5 512,392.9 515,393.9 518,395.6 520,397.3 522.2,400 523.7,403 524.6,406 524.9,409 524.5,413 523.6,416 522.4,418 520.8,420 518,422.4 515,424.1 512,425.1ZM370,442.2 367,442.6 363,442.4 360,441.5 357,440 354.4,438 352.6,436 350.8,433 349.7,430 349.2,427 349.3,423 350.1,420 351.5,417 353.8,414 356,412.1 359,410.3 362,409.2 365,408.8 368,408.8 372,409.7 375.4,411 378.4,413 380.5,415 382,417.2 383.2,420 383.6,423 383.5,427 382.7,430 380.9,434 378.8,437 376,439.5 373,441.2 370,442.2ZM561,450 558,450.5 554,450.3 551,449.6 547.7,448 545,445.9 542.5,443 540.8,440 539.9,437 539.4,434 539.6,430 540.3,427 541.7,424 544,421.2 546.8,419 550,417.2 553,416.3 556,415.9 560,416.1 563,417 566,418.5 569,420.9 570.8,423 572.6,426 573.6,429 574.1,432 573.9,436 573.2,439 571.8,442 569.5,445 567,447.2 564,449 561,450ZM463,452 460,452.3 457,452 454,451 450.8,449 447.6,446 445.5,443 444.2,440 443.3,436 443.4,432 444.1,429 445.4,426 447.5,423 450,420.6 453,418.7 456,417.5 459,416.9 463,417 466,417.6 469,418.9 472,420.8 474.5,423 476,425 477.5,428 478.2,431 478.4,435 478,438 477,441.1 475,444.7 473,447 470,449.3 467,450.8 463,452ZM454,503 451,503.5 447,503.3 444,502.5 441,501.1 438.3,499 436,496.4 434.2,493 433.3,490 433,486 433.4,483 434.3,480 436,477 438,474.7 441,472.3 444,470.9 448,469.7 451,469.5 454,469.9 456.8,471 459,472.3 462,475.1 464,477.6 465.7,481 466.4,484 466.6,487 466.3,490 465.4,493 463.8,496 460,500.1 457,501.9 454,503ZM494,540.1 491,540.4 488,540.2 485,539.2 483,538.1 481,536.3 479.2,534 478,531.7 477.2,529 477.2,524 478,521.3 479.2,519 481,516.7 483,515.1 485,513.9 488,512.9 491,512.6 494,512.9 498.7,515 501,516.9 502.6,519 503.7,521 504.6,524 504.6,529 503.7,532 502.6,534 501,536.1 499,537.8 497,539 494,540.1ZM97,553.1 94,553.1 91,552.5 86.3,550 82.9,546 81.5,543 80.9,540 80.9,537 81.6,534 84,529.5 86,527.5 88.1,526 91,524.7 94,524.1 99,524.5 102,525.6 104.2,527 106.3,529 108,531.3 109.2,534 109.9,537 109.9,540 109.3,543 108,545.9 106.5,548 104.5,550 102,551.6 97,553.1ZM723,600.1 720,600 717.7,599 715.6,597 714.4,594 714.4,591 715.8,588 718,586 721,585.1 724,585.4 726.9,587 728.9,590 729.3,592 729,595 728,597 725.9,599 723,600.1ZM822,615 819,614.4 817,613.2 815.5,611 814.9,609 815,606.4 816.1,604 818.5,602 821,601.2 824,601.6 826.4,603 828,605.2 828.6,608 828,611 826.6,613 825,614.2 822,615ZM99,150.1 96.3,150 94,149 92,146.9 91.1,144 91.5,141 92.6,139 95,137 97,136.5 100,136.8 102,137.8 104,140 104.6,142 104.5,145 103.7,147 101.8,149 99,150.1ZM199,170 195,170 191,168.4 189.2,167 187.6,165 186.1,161 186.1,157 187.7,153 191,149.8 195,148.2 199,148.2 203,149.8 206.3,153 207.9,157 207.9,161 207.4,163 206,165.6 203,168.4 199,170ZM825,228 820,227.4 815.8,225 814,223.1 812.7,221 811.8,219 811.3,216 811.9,211 814.1,207 816,205.1 818,203.7 820,202.8 823,202.2 828,202.7 832.3,205 834.3,207 835.6,209 836.5,211 837.1,214 836.6,219 835.7,221 834,223.6 830,226.7 828,227.5 825,228ZM430,237.2 425,237.4 420.9,236 419,234.7 417,232.7 415.4,230 414.8,228 414.6,223 416,219 417.4,217 419.6,215 424,213 429,212.8 433,214.1 435,215.5 437,217.8 439,222 439.2,227 437.9,231 436.5,233 434.5,235 430,237.2ZM474,280.1 471,280.8 468,280.9 465,280.4 463,279.5 460,277.5 458,275.5 456.3,273 455,270 454.4,267 454.4,264 455.1,261 456,258.7 457.8,256 459.8,254 462,252.4 465,251.1 468,250.5 471,250.5 476.2,252 479,253.8 481,255.7 482.6,258 483.9,261 484.6,264 484.6,267 484,270 483,272.5 481.4,275 479.5,277 477,278.8 474,280.1ZM367,333 364,333.6 361,333.7 358,333.1 355,331.9 352.2,330 350,327.8 348.2,325 347,322 346.5,319 346.6,316 347.2,313 348.5,310 350.7,307 352.9,305 358,302.5 361,301.9 364,302 367,302.6 370,303.8 373,305.9 374.9,308 377.6,313 378.2,316 378.3,319 377.8,322 376.7,325 375,327.6 372.6,330 370,331.8 367,333ZM462,332.1 459,332.6 456,332.5 453,331.7 450,330.2 447.2,328 445.4,326 444.3,324 443.3,321 442.9,318 443,315 443.8,312 445.3,309 447,306.8 450,304.4 453,302.9 456,302 461,301.9 464,302.8 466.2,304 469,306.4 471,308.9 472.2,311 473.2,314 473.5,317 473.3,320 471.4,325 469.2,328 467,329.8 462,332.1ZM556,340.1 553,340.4 550,340.1 547,339.2 544,337.8 541.6,336 539.9,334 538.8,332 537.8,329 537.6,326 538,323 538.9,320 540.4,317 542,315 544.2,313 547,311.4 550,310.5 553,310.2 556,310.5 561,312.5 564,315 565.6,317 567.7,322 568.1,325 567.9,328 566,333 564,335.6 562,337.4 559,339.2 556,340.1ZM415,356.2 410,356.7 407,356.1 404.3,355 400.6,352 399,349.8 397.8,347 397.2,344 397.3,341 398.9,336 402.3,332 405,330.2 407,329.5 410,328.9 413,329 418,330.7 422,334 423.4,336 424.6,339 425,342 424.9,345 423.1,350 421.6,352 419.4,354 415,356.2ZM511,363 506,362.6 503,361.3 501,360 499,358.1 497.6,356 495.9,351 496.1,346 497,343.3 498.3,341 500.1,339 502.7,337 505,336 508,335.2 513,335.5 516,336.6 519,338.2 520.9,340 522.3,342 523.2,344 523.8,347 523.1,353 522,355.7 520.5,358 518.4,360 516,361.6 511,363ZM414,417.1 411,417.7 408,417.6 402.8,416 398.6,413 397,410.7 395.9,408 395.7,403 396.4,400 397.6,397 399,394.9 401,393 403,391.6 406,390.4 409,389.9 412,390 417,391.8 419,393.3 421,395.5 423.2,400 423.7,405 423.1,408 422,410.6 419,414.3 416.6,416 414,417.1ZM513,422.2 508,423 503,421.9 498.6,419 496.9,417 495.3,414 494.6,411 494.5,408 495.8,403 497,400.9 499,398.7 501.3,397 504,395.7 507,395.1 510,395.1 515,396.7 519.1,400 520.5,402 521.8,405 522.3,410 521,415 518,419.1 515.5,421 513,422.2ZM370,440.1 367,440.6 364,440.5 359,438.9 356.3,437 354.4,435 353,432.9 351.8,430 351.2,427 351.2,424 351.9,421 353,418.5 354.7,416 356.8,414 359,412.5 362,411.3 365,410.8 368,410.9 374,412.7 376.1,414 378.3,416 379.7,418 381,421 381.5,424 381.3,427 379.2,433 377,436 375,437.7 373,439 370,440.1ZM560,448.2 557,448.5 554,448.2 551,447.4 548.4,446 546,444 544,441.6 542.6,439 541.8,436 541.5,433 541.8,430 542.7,427 544,424.7 546,422.3 548,420.7 551,419 554,418.2 557,417.9 560,418.2 565,420.3 569,424 570.8,427 571.8,430 572.1,433 571.8,436 570,441 568,443.6 566,445.4 563,447.2 560,448.2ZM465,449.1 462,449.7 459,449.7 456,449.1 453,447.6 450,445.3 448.1,443 445.9,438 445.5,435 445.7,432 446.5,429 448,426 450,423.5 452,421.9 457,419.6 460,419.1 463,419.2 468.2,421 471,422.9 473,425 474.3,427 475.5,430 476.1,433 476,436 475.4,439 474.1,442 472,444.9 470,446.7 467.9,448 465,449.1ZM452,501.1 449,501.2 446,500.7 443,499.5 441,498.3 439,496.4 437.2,494 435.5,489 435.3,486 435.8,483 436.9,480 438.2,478 440,476 442.8,474 445,473 448,472.3 451,472.1 454,472.7 456.9,474 459,475.5 461,477.5 462.7,480 464.2,485 464.3,488 463.7,491 462.4,494 461,496 457,499.3 452,501.1ZM495,537.2 493,537.7 490,537.9 486,536.8 482.3,534 480,530 479.6,528 479.6,525 480.9,521 483.3,518 487,515.8 489,515.2 492,515.1 496,516.3 499.5,519 501.8,523 502.3,527 501.4,531 499,534.5 497,536.1 495,537.2ZM97,550 93,549.9 88.7,548 85.8,545 84.7,543 84,540 84.2,536 86,531.9 89,529 91,527.9 94,527.2 98,527.4 102,529.2 105,532.2 106,534.1 106.8,537 106.8,540 106.4,542 104.2,546 101,548.7 97,550ZM200,166 197,166.6 194,166 191.3,164 190,161.9 189.5,159 190,156.3 192,153.5 194.5,152 197,151.6 200,152.2 202.5,154 204,156.3 204.5,159 204,161.9 202.7,164 200,166ZM828,225.2 824,225.9 820,225 816.9,223 815.2,221 814.1,219 813.4,215 814.2,211 815.3,209 817,207.1 820,205.2 824,204.3 828,205 830,206 832,207.7 834.2,211 835,215 834.3,219 832,222.5 830,224.2 828,225.2ZM430,234 426,234.5 423,233.7 420,231.5 417.9,228 417.5,224 418.4,221 420.7,218 424,216.1 428,215.7 431,216.6 434,218.9 435.8,222 436.3,226 435.5,229 433.3,232 430,234ZM472,278.1 467,278.1 465,277.5 462.2,276 459,272.8 457.6,270 457,268 457.1,263 459,258.4 462.5,255 467,253.1 472,253.1 476.5,255 480,258.4 481.9,263 482,268 481.4,270 480,272.8 476.8,276 475,277.1 472,278.1ZM367,331.1 364,331.8 361,331.8 356,330.3 353.9,329 351.8,327 350.3,325 349,322 348.4,319 348.5,316 350,311.2 351.4,309 353.4,307 358,304.4 363,303.7 366,304.2 368.2,305 372.5,308 374.1,310 375.6,313 376.3,316 376.4,319 375,324 372,328.1 370,329.6 367,331.1ZM461,330.1 456,330.2 453,329.3 451,328.2 447.6,325 446.4,323 445.4,320 445.3,315 446.2,312 447.3,310 449,308 451,306.4 453,305.3 456,304.4 461,304.4 464,305.5 466,306.8 469.1,310 470.2,312 471.1,315 471,320 469,324.7 465.8,328 464,329.1 461,330.1ZM556,338 551,338.2 546,336.4 543.9,335 542,333 540.2,329 540,324 541.5,319 543,316.9 545,315 547,313.7 550,312.6 555,312.4 558,313.2 560,314.3 562.2,316 563.8,318 565.6,322 566,327 565.2,330 564.2,332 561,335.6 558.8,337 556,338ZM413,354.1 410,354.2 408,353.8 404.3,352 401.5,349 399.9,345 399.7,342 400,340 401.9,336 405,333.1 409,331.5 412,331.4 414,331.7 418,333.7 421,337 422.4,341 422.3,345 420.7,349 419.1,351 417,352.6 413,354.1ZM513,360.1 509,360.5 505,359.5 501.4,357 498.9,353 498.4,351 498.3,348 499.4,344 502,340.6 506,338.3 508,337.8 511,337.7 515,338.9 518.8,342 520.5,345 521,347 521.1,350 520.1,354 518.8,356 517,357.9 513,360.1ZM412,415 409,415.2 407,414.9 403,413.1 400,410 398.4,406 398.7,401 400.6,397 404,393.9 408,392.5 411,392.4 413,392.8 417,394.9 419.7,398 421.1,402 421.2,405 420.8,407 419,410.6 416,413.4 412,415ZM511,420.2 509,420.4 506,420.2 502,418.5 500.2,417 498.6,415 497.1,411 497.1,407 497.7,405 499,402.5 502,399.5 506,397.8 509,397.6 511,397.8 515,399.6 518.2,403 519.7,407 519.7,411 518,415.2 515,418.4 511,420.2ZM370,438.1 365,438.6 362,438 360,437.1 356.1,434 353.9,430 353.2,425 353.7,422 354.5,420 357.5,416 360,414.3 362,413.4 367,412.8 372,414.1 376.1,417 378.6,421 379.1,423 379.2,426 378.6,429 377.4,432 376,434.1 374,436 370,438.1ZM560,446 555,446.3 552,445.5 550,444.6 547.9,443 546.1,441 544.9,439 543.9,436 543.7,431 544.6,428 545.7,426 549,422.5 551,421.3 554,420.3 559,420.1 561.9,421 564,422.1 566.3,424 567.9,426 569.6,430 569.9,435 569.1,438 568.2,440 566.7,442 564.4,444 560,446ZM464,447.1 459,447.4 456,446.6 454,445.6 451.9,444 450.1,442 449,440 448,437 447.9,432 448.9,429 450,427 453,423.9 455,422.7 458,421.6 463,421.5 466,422.4 468,423.5 471.6,427 473.5,431 473.8,436 473.1,439 472.1,441 470.7,443 468.5,445 464,447.1ZM454,498.2 452,498.7 449,498.9 445,497.9 441,495.2 438.4,491 437.8,489 437.6,486 438.2,483 439,481 442,477.3 446,475.1 448,474.6 451,474.5 455,475.7 457,476.8 459,478.7 460.6,481 461.4,483 461.9,485 461.9,488 460.8,492 458,495.7 454,498.2ZM493,535.2 489,535.2 486,534 483.2,531 482.1,528 482.1,525 483.2,522 486,519 489,517.8 493,517.8 496,519.2 498.6,522 499.7,525 499.7,528 498.6,531 496,533.8 493,535.2ZM98,546 95,546.4 92,545.6 89.7,544 88,541.2 87.6,539 88,535.9 90,532.9 93,531.1 95,530.8 97,530.9 99.6,532 101.7,534 103,536.6 103.1,540 102,542.9 100,545 98,546ZM827,223.2 824,223.7 820.8,223 817.9,221 816.1,218 815.6,215 816.2,212 818.1,209 821,207.1 825,206.5 828,207.4 830.3,209 832.2,212 832.8,216 831.9,219 830,221.4 827,223.2ZM430,230.1 428,230.9 426,230.9 423.7,230 421.8,228 421.1,226 421.1,224 422,221.8 423.9,220 426,219.3 428,219.3 430,220.1 431.9,222 432.7,224 432.7,226 432,228.1 430,230.1ZM473,275.2 469,275.9 465,274.8 462,272.6 459.8,269 459.3,265 460.3,261 462.6,258 466,256 470,255.3 474,256.4 477,258.6 479.1,262 479.8,266 478.8,270 476.6,273 473,275.2ZM362,330 359,329.5 357,328.7 353.4,326 350.9,322 350.4,320 350.2,317 351.2,313 354,308.9 358,306.4 360,305.8 363,305.6 367,306.5 371,309.1 373.6,313 374.3,315 374.6,318 374.2,321 373.4,323 371,326.5 367,329.1 365,329.7 362,330ZM460,328 456,328 452,326.2 448.9,323 447.5,319 447.6,315 449.3,311 452,308.4 456,306.6 460,306.6 464,308.1 467.1,311 468.8,315 469.1,318 468.7,320 467,323.7 464,326.5 460,328ZM555,336.2 551,336.2 547,334.6 544,331.8 542.2,328 542,325 542.2,323 543.9,319 547,316 551,314.4 555,314.4 559,316 562.1,319 563.8,323 564,326 563.7,328 562,331.7 559,334.6 555,336.2ZM414,351.3 410,351.7 407,350.7 404.7,349 402.8,346 402.2,342 403,339 405,336.3 408,334.4 412,333.9 415,334.8 417.9,337 419.6,340 420,344 419,347 417,349.5 414,351.3ZM510,358 507,357.6 504,356 501.7,353 500.8,350 501.3,346 503,343.2 506,341 509,340.2 513,340.8 516,342.8 518,345.8 518.6,349 518,352.4 516,355.4 513,357.4 510,358ZM413,412.1 409,412.7 406,411.9 403.4,410 401.4,407 400.9,403 401.7,400 404,397 407,395.3 411,394.9 414,395.9 416.6,398 418.3,401 418.7,405 417.7,408 416,410.2 413,412.1ZM512,417.2 509,417.9 505,417.3 502,415.2 500,412.1 499.5,408 500.4,405 502,402.8 505,400.7 509,400.1 512,400.8 515,403 516.8,406 517.3,410 516.4,413 515,415 512,417.2ZM369,436.3 365,436.6 361,435.4 357.9,433 355.7,429 355.2,425 356.2,421 359,417.4 363,415.2 367,414.8 371,415.9 373,417.1 374.9,419 376.6,422 377,424 377,427 375.7,431 373,434.2 369,436.3ZM559,444.2 556,444.3 554,444 550,442.1 547.2,439 545.8,435 545.8,431 547.5,427 549,425.2 551,423.6 555,422.2 559,422.2 563,423.9 566.1,427 567.8,431 567.8,435 567.3,437 566,439.5 563,442.5 559,444.2ZM463,445.1 459,445.1 455,443.6 453,442 451.5,440 450,436 450.2,432 452,428 455,425.2 459,423.7 463,423.7 467,425.5 469.6,428 471.4,432 471.6,436 470,440.2 467,443.3 463,445.1ZM453,496.1 449,496.6 446,495.8 443,493.9 441.5,492 440.5,490 439.9,486 441.1,482 443.6,479 447,477.2 451,476.9 454.5,478 456,479 457.9,481 459.3,484 459.6,488 458.7,491 456.5,494 453,496.1ZM492,532.2 490,532.2 488,531.5 486.3,530 485.3,528 485.1,526 486,523.4 487.2,522 489,521 491,520.7 493,521.1 495,522.4 496.5,525 496.6,527 496,529.3 494.5,531 492,532.2ZM827,220.1 824,220.8 822,220.4 820,219.1 819,217.6 818.5,215 818.8,213 820,211.2 821.5,210 824,209.4 826,209.7 828,210.8 829.1,212 829.8,214 829.9,216 829,218.3 827,220.1ZM471,273.3 468,273.3 465,272 463,270 461.8,267 461.9,264 463.2,261 465.3,259 468,257.9 471,257.9 474,259.2 476,261.3 477.1,264 477.2,267 476,270 474,272 471,273.3ZM364,328 360,327.9 356,325.9 353.5,323 352.1,319 352.4,315 354,311.8 357,309 361,307.5 365,307.8 368,309.1 371,312 372.6,316 372.5,320 370.7,324 368,326.5 364,328ZM462,325.1 459,325.9 455,325.3 452,323.3 450.4,321 449.6,318 449.9,315 451.4,312 454,309.7 457,308.7 460.6,309 464,310.9 465.7,313 466.7,316 466.4,320 464.7,323 462,325.1ZM555,334.1 551,334.1 548,332.8 545.3,330 544.1,327 544.3,323 545.7,320 548,317.8 551,316.5 555,316.5 558,317.8 560.3,320 561.7,323 561.8,327 560.7,330 558,332.8 555,334.1ZM413,348.3 411,348.6 408.5,348 407,346.9 405.7,345 405.3,343 406,340 407.8,338 409,337.4 411.2,337 414,337.8 415.5,339 416.6,341 416.9,343 416,346 415,347.1 413,348.3ZM512,354.4 510,354.9 508,354.6 506,353.5 504.7,352 504,350 504,347.9 505,345.7 507,343.9 510,343.3 512,343.8 513.8,345 515,346.7 515.5,349 515,351.5 514,353 512,354.4ZM412,409.2 410,409.6 407.2,409 405.8,408 404.5,406 404,403.7 404.7,401 406,399.4 408,398.3 410,398 412,398.5 414,399.8 415,401.2 415.6,404 415.2,406 414,407.8 412,409.2ZM511,414.2 508,414.8 506,414.3 504.2,413 503,411.2 502.6,409 502.9,407 504,405.2 505.5,404 508,403.2 510,403.5 512,404.5 513.3,406 514.1,408 514,410.5 513,412.5 511,414.2ZM369,434.2 365,434.6 362,433.6 359.8,432 357.8,429 357.2,425 358,422 360,419.2 363,417.3 367,416.8 370,417.7 373,420 374.6,423 374.9,427 373.9,430 372,432.4 369,434.2ZM559,442 555,442.1 552,440.9 549.1,438 547.9,435 548,431 549.3,428 552,425.5 555,424.3 559,424.4 562,425.7 564.3,428 565.6,431 565.7,435 564.5,438 562,440.7 559,442ZM461,443.1 458,442.6 455,440.8 452.9,438 452.2,434 452.8,431 455,428 458,426.2 461,425.8 464,426.4 467,428.4 468.8,431 469.4,434 469,437.1 467,440.4 464,442.4 461,443.1ZM451,494.2 448,494 445.6,493 443.6,491 442.4,488 442.4,485 443.9,482 446,480.2 449,479.2 452,479.5 454.8,481 456.4,483 457.3,486 457,489 456,491 454,493 451,494.2ZM472,270.3 470,270.9 468,270.7 466,269.6 464.7,268 464.2,266 464.4,264 465.6,262 467,260.9 469,260.3 471,260.5 473,261.6 474.2,263 474.8,265 474.7,267 473.6,269 472,270.3ZM364,326.1 361,326.2 357.9,325 355,322 354,319 354.1,316 355.4,313 358,310.5 361,309.4 364,309.5 367,310.7 369.4,313 370.7,316 370.8,319 369.8,322 367,324.9 364,326.1ZM459,323 457,322.9 454.8,322 453.1,320 452.5,318 452.6,316 453.5,314 455,312.6 457,311.7 459,311.6 461,312.3 463,314 463.8,316 463.9,318 463,320.5 461.5,322 459,323ZM554,332.2 551,332 549,331 547.1,329 546.1,326 546.4,323 547.5,321 550,319 552,318.4 555,318.6 557,319.6 559,321.8 559.8,324 559.8,327 558.9,329 557,331 554,332.2ZM368,432.4 365,432.5 363,431.9 361,430.4 359.6,428 359.2,425 359.7,423 361,421 364,419.1 367,418.8 369,419.4 371.2,421 372.8,424 372.9,427 372.2,429 370.5,431 368,432.4ZM558,440.1 555,440 552.8,439 550.9,437 549.8,434 550.1,431 551.2,429 553,427.3 556,426.2 559,426.5 561,427.6 563,429.9 563.7,432 563.6,435 562.7,437 560.8,439 558,440.1ZM462,440 459.5,440 457.4,439 456,437.6 455.3,436 455.1,434 456,431.2 457,430 459,428.9 461,428.7 463,429.1 465,430.5 466.4,433 466.5,435 466,437 464.3,439 462,440ZM452,491.4 450,491.9 448,491.6 446,490.3 445.1,489 444.6,487 444.9,485 446.1,483 448,481.8 450,481.5 452,482 453.5,483 454.7,485 455,487 454.5,489 453.8,490 452,491.4ZM470,268 468,267.6 467,266 467.6,264 469,263.2 471,263.6 471.9,265 471.5,267 470,268ZM364,324.2 361,324.3 359,323.5 357,321.6 355.9,319 356,316 357,314 359,312.1 361,311.3 364,311.4 366,312.2 367.8,314 368.8,316 368.9,319 368.2,321 366.5,323 364,324.2ZM554,330.1 552,330.1 550,329.2 548.9,328 548.1,326 548.3,324 549,322.5 550,321.4 552,320.5 554,320.5 555.3,321 556.6,322 557.7,324 557.9,326 557.1,328 556,329.2 554,330.1ZM368,430.2 366,430.6 364,430.1 361.8,428 361.2,426 361.5,424 362.9,422 364,421.3 366,420.8 368,421.2 369.3,422 370.7,424 371,426 370.4,428 369.7,429 368,430.2ZM558,438 556,438.1 554,437.3 552.7,436 551.9,434 552,432 553,430 554.2,429 556,428.3 558,428.4 559.4,429 560.6,430 561.6,432 561.7,434 561,435.8 560,437 558,438ZM450,489.2 449,489 448,488.4 447.4,487 448,485 450,484.2 451.6,485 452.2,486 452.2,487 451.9,488 451,488.9 450,489.2ZM364,322.3 362,322.5 360,321.9 358.9,321 357.8,319 358,316 359,314.5 361,313.3 364,313.4 366,314.7 366.8,316 367.1,318 366.6,320 365.9,321 364,322.3ZM554,327.5 552,327.5 550.7,326 550.9,324 552,323.1 554,323.1 555.1,324 555.3,326 554,327.5ZM366,428.1 365,427.8 364.1,427 363.7,426 363.8,425 364.4,424 366,423.3 367.8,424 368.5,426 368,427.2 367,427.9 366,428.1ZM558,435.3 556,435.5 554.5,434 554.7,432 555.8,431 557.8,431 558.9,432 559.1,434 558,435.3ZM363,320.1 361,319.7 360,318 360.8,316 362,315.5 364,316 364.6,317 364.4,319 363,320.1Z"/>
</g>
<path class="w" d="M97.9,143.3 154.8,132.3 197,159.1 249.2,147.8M97.9,143.3 90.3,184.7 132.2,212.3 189.5,201 197,159.1M189.5,201 227,223.6M447,191 426.9,225.1 469.5,265.6 458.2,317.3 411.1,342.8 409.8,403.8 460.8,434.4 508.4,409.0 509.7,349.1 458.2,317.3M426.9,225.1 403.5,230.6M411.1,342.8 362.4,317.8 330.3,322.3 305.9,295.9M330.3,322.3 313.5,354.9M409.8,403.8 366.1,425.7M509.7,349.1 553,325.3M508.4,409.0 556.8,433.2 590.1,429.9 605.2,396.3M590.1,429.9 614.8,457.1M460.8,434.4 449.8,486.7 490.9,526.5 472.5,563.9M490.9,526.5 515.2,522.5M554.4,97.6 543.8,148.6 585.2,189.2 566.4,223.1M585.2,189.2 609,183M585.2,189.2 610.3,188M663.5,91.4 683,92 708.7,119.5M641.3,288.9 692.6,254.5M786.6,190.5 824.2,215.1M729.8,359.2 759.6,416.4M721.5,406.1 794.8,371.5M159.3,336.6 190.7,393.5M124.7,380 197.7,346.1M61.5,469.6 102.9,495.7 156.8,485.2M102.9,495.7 95.4,538.6 133,562M211.3,632.3 236.4,659.4 268.3,654.4M236.4,660.5 255.5,661 268.3,654.4M352.6,528.4 334.3,564 374.9,602.9 364.4,655.1M334.3,564 310.4,564.5M334.3,564 312.4,569M668.9,602.8 721.8,592.6 763.2,620 821.7,608.1 858.2,630.8M721.8,592.6 729.6,550.5 692.5,528.7M729.6,550.5 785.9,539.6 828,567 821.7,608.1M249.2,147.8Q272,175 277.6,190.5T287.6,219.3M631.5,532.8Q636,550 642.4,563.6T668.9,602.8"/>
<path class="bx" d="M146.5,132.5H164.5M155.5,123.5V141.5M81.5,185.5H99.5M90.5,176.5V194.5M123.5,212.5H141.5M132.5,203.5V221.5M181.5,201.5H199.5M190.5,192.5V210.5M218.5,224.5H236.5M227.5,215.5V233.5M240.5,148.5H258.5M249.5,139.5V157.5M269.5,190.5H287.5M278.5,181.5V199.5M279.5,219.5H297.5M288.5,210.5V228.5M451.5,89.5H469.5M460.5,80.5V98.5M395.5,231.5H413.5M404.5,222.5V240.5M321.5,322.5H339.5M330.5,313.5V331.5M297.5,296.5H315.5M306.5,287.5V305.5M305.5,355.5H323.5M314.5,346.5V364.5M276.5,372.5H294.5M285.5,363.5V381.5M581.5,430.5H599.5M590.5,421.5V439.5M596.5,396.5H614.5M605.5,387.5V405.5M606.5,457.5H624.5M615.5,448.5V466.5M506.5,522.5H524.5M515.5,513.5V531.5M545.5,98.5H563.5M554.5,89.5V107.5M535.5,149.5H553.5M544.5,140.5V158.5M576.5,189.5H594.5M585.5,180.5V198.5M557.5,223.5H575.5M566.5,214.5V232.5M600.5,183.5H618.5M609.5,174.5V192.5M601.5,188.5H619.5M610.5,179.5V197.5M655.5,91.5H673.5M664.5,82.5V100.5M674.5,92.5H692.5M683.5,83.5V101.5M700.5,120.5H718.5M709.5,111.5V129.5M632.5,289.5H650.5M641.5,280.5V298.5M684.5,254.5H702.5M693.5,245.5V263.5M778.5,190.5H796.5M787.5,181.5V199.5M713.5,406.5H731.5M722.5,397.5V415.5M786.5,372.5H804.5M795.5,363.5V381.5M738.5,388.5H756.5M747.5,379.5V397.5M116.5,380.5H134.5M125.5,371.5V389.5M189.5,346.5H207.5M198.5,337.5V355.5M163.5,363.5H181.5M172.5,354.5V372.5M53.5,470.5H71.5M62.5,461.5V479.5M94.5,496.5H112.5M103.5,487.5V505.5M148.5,485.5H166.5M157.5,476.5V494.5M124.5,562.5H142.5M133.5,553.5V571.5M202.5,632.5H220.5M211.5,623.5V641.5M227.5,659.5H245.5M236.5,650.5V668.5M259.5,654.5H277.5M268.5,645.5V663.5M247.5,661.5H265.5M256.5,652.5V670.5M344.5,528.5H362.5M353.5,519.5V537.5M325.5,564.5H343.5M334.5,555.5V573.5M366.5,603.5H384.5M375.5,594.5V612.5M355.5,655.5H373.5M364.5,646.5V664.5M301.5,564.5H319.5M310.5,555.5V573.5M303.5,569.5H321.5M312.5,560.5V578.5M623.5,533.5H641.5M632.5,524.5V542.5M633.5,564.5H651.5M642.5,555.5V573.5M660.5,603.5H678.5M669.5,594.5V612.5M713.5,593.5H731.5M722.5,584.5V602.5M754.5,620.5H772.5M763.5,611.5V629.5M813.5,608.5H831.5M822.5,599.5V617.5M849.5,631.5H867.5M858.5,622.5V640.5M721.5,550.5H739.5M730.5,541.5V559.5M683.5,529.5H701.5M692.5,520.5V538.5M777.5,540.5H795.5M786.5,531.5V549.5M819.5,567.5H837.5M828.5,558.5V576.5M61.5,301.5H79.5M70.5,292.5V310.5M218.5,498.5H236.5M227.5,489.5V507.5M184.5,556.5H202.5M193.5,547.5V565.5M626.5,379.5H644.5M635.5,370.5V388.5M590.5,592.5H608.5M599.5,583.5V601.5M755.5,266.5H773.5M764.5,257.5V275.5M840.5,452.5H858.5M849.5,443.5V461.5M450.5,663.5H468.5M459.5,654.5V672.5M662.5,274.5H680.5M671.5,265.5V283.5M57.5,673.5H75.5M66.5,664.5V682.5M269.5,462.5H287.5M278.5,453.5V471.5"/>
<path class="w" d="M89.5,143.5H107.5M98.5,134.5V152.5M188.5,159.5H206.5M197.5,150.5V168.5M815.5,215.5H833.5M824.5,206.5V224.5M86.5,539.5H104.5M95.5,530.5V548.5M150.5,337.5H168.5M159.5,328.5V346.5M182.5,394.5H200.5M191.5,385.5V403.5M721.5,359.5H739.5M730.5,350.5V368.5M751.5,416.5H769.5M760.5,407.5V425.5M438.5,191.5H456.5M447.5,182.5V200.5M463.5,564.5H481.5M472.5,555.5V573.5M420.5,225.5H434.5M427.5,218.5V232.5M463.5,266.5H477.5M470.5,259.5V273.5M451.5,317.5H465.5M458.5,310.5V324.5M404.5,343.5H418.5M411.5,336.5V350.5M403.5,404.5H417.5M410.5,397.5V411.5M454.5,434.5H468.5M461.5,427.5V441.5M501.5,409.5H515.5M508.5,402.5V416.5M503.5,349.5H517.5M510.5,342.5V356.5M355.5,318.5H369.5M362.5,311.5V325.5M359.5,426.5H373.5M366.5,419.5V433.5M546.5,325.5H560.5M553.5,318.5V332.5M550.5,433.5H564.5M557.5,426.5V440.5M443.5,487.5H457.5M450.5,480.5V494.5M484.5,526.5H498.5M491.5,519.5V533.5"/>
</g>
<text class="hf" transform="translate(59.3,46.5) scale(1,1.1)" xml:space="preserve" textLength="728.0" lengthAdjust="spacing">Plane:  3.4579x  2.8560y  3.2764z =  2.8788    Cont-Lev(eA-3):  0.00 13.00  1.00</text>
<text class="hf" transform="translate(59.3,62.5) scale(1,1.1)" xml:space="preserve" textLength="655.2" lengthAdjust="spacing">  Tol = 1.5 Ang              Step =  0.0000 Ang      Resolution 27.5 Deg</text>
<text class="hf" transform="translate(811.5,46.5) scale(1,1.1)" xml:space="preserve">Fo-Map</text>
<text class="bf" transform="translate(122,715) scale(1,0.92)" xml:space="preserve">sdemo</text>
<text class="hf" transform="translate(881,686.5) scale(1,1.1)" xml:space="preserve">Ang</text>
<text class="bf" transform="translate(27.5,668.5) rotate(-90) scale(1,1.1)" xml:space="preserve">PLATON-Nov 30 09:04:37 1998 - (291198)</text>
<g shape-rendering="crispEdges">
<rect x="926" y="29" width="2" height="768" fill="#fff"/><rect x="928" y="29" width="102" height="1" fill="#000"/>
<path class="w" d="M928,55.5H1030M928,82.5H1030M928,108.5H1030M928,135.5H1030M928,161.5H1030M928,188.5H1030M928,215.5H1030M928,241.5H1030M928,268.5H1030M928,294.5H1030M928,321.5H1030M928,348.5H1030M928,374.5H1030M928,401.5H1030M928,427.5H1030M928,454.5H1030M928,481.5H1030M928,507.5H1030M928,534.5H1030M928,560.5H1030M928,587.5H1030M928,614.5H1030M928,640.5H1030M928,667.5H1030M928,693.5H1030M928,720.5H1030"/>
<path class="w" d="M962.5,321.5v-4.5M996.5,321.5v-4.5M948.5,348.5v-4.5H968.5v4.5M989.5,348.5v-4.5M1009.5,348.5v-4.5M968.5,374.5v-4.5H989.5v4.5M948.5,374.5v-4.5M1009.5,374.5v-4.5M944.5,401.5v-4.5M962.5,401.5v-4.5M978.5,401.5v-4.5M996.5,401.5v-4.5M1012.5,401.5v-4.5M944.5,427.5v-4.5M962.5,427.5v-4.5M978.5,427.5v-4.5M996.5,427.5v-4.5M1012.5,427.5v-4.5M944.5,454.5v-4.5M962.5,454.5v-4.5M978.5,454.5v-4.5M996.5,454.5v-4.5M1012.5,454.5v-4.5M927.5,507.5v-4.5H978.5v4.5M968.5,534.5v-4.5H989.5v4.5M948.5,534.5v-4.5M1009.5,534.5v-4.5M978.5,560.5v-4.5H991.5v4.5M940.5,560.5v-4.5M953.5,560.5v-4.5M966.5,560.5v-4.5M1004.5,560.5v-4.5M1017.5,560.5v-4.5M978.5,720.5v-4.5"/>
<rect x="961" y="587" width="1" height="1" fill="#000"/><rect x="995" y="587" width="1" height="1" fill="#000"/>
</g>
<text class="mf" x="929" y="42" xml:space="preserve" style="fill:#ffd700">ContourMENU</text>
<text class="mf" x="929" y="96" xml:space="preserve" style="fill:#fff">Diff-Map</text>
<text class="mf" x="929" y="122" xml:space="preserve" style="fill:#f00">Fo-Map</text>
<text class="mf" x="929" y="149" xml:space="preserve" style="fill:#fff">SQUEEZE-Map</text>
<text class="mf" x="929" y="202" xml:space="preserve" style="fill:#fff">Plane-TNCP</text>
<text class="mf" x="929" y="229" xml:space="preserve" style="fill:#f00">Plane-abcd</text>
<text class="mf" x="929" y="255" xml:space="preserve" style="fill:#fff">PlaneBisect</text>
<text class="mf" x="929" y="282" xml:space="preserve" style="fill:#fff">Plane-Perp</text>
<text class="mf" x="929" y="308" xml:space="preserve" style="fill:#fff">PlaneXYXZYZ</text>
<text class="mf" x="929" y="335" xml:space="preserve" style="fill:#fff">PlaneDisTol</text>
<text class="mf" x="929" y="362" xml:space="preserve" style="fill:#fff">VertAngSize</text>
<text class="mf" x="929" y="388" xml:space="preserve" style="fill:#fff">Horiz Shift</text>
<text class="mf" x="929" y="415" xml:space="preserve" style="fill:#fff">Vert  Shift</text>
<text class="mf" x="929" y="441" xml:space="preserve" style="fill:#fff">Z-Rotation</text>
<text class="mf" x="929" y="468" xml:space="preserve" style="fill:#f00">Bonds</text>
<text class="mf" x="929" y="495" xml:space="preserve" style="fill:#fff">Label -Hat+</text>
<text class="mf" x="929" y="521" xml:space="preserve" style="fill:#fff">Ch-Step-Siz</text>
<text class="mf" x="929" y="548" xml:space="preserve" style="fill:#fff">Ch-Cntr-Lev</text>
<text class="mf" x="929" y="574" xml:space="preserve" style="fill:#fff">Up</text>
<text class="mf" x="929" y="601" xml:space="preserve" style="fill:#fff">Down</text>
<text class="mf" x="929" y="654" xml:space="preserve" style="fill:#f00">Decoration</text>
<text class="mf" x="929" y="681" xml:space="preserve" style="fill:#fff">EPS</text>
<text class="mf" x="929" y="707" xml:space="preserve" style="fill:#fff">MenuOff End</text>
<text class="mf" x="962" y="737" xml:space="preserve">Exit</text>
<text class="mf" x="931" y="767" xml:space="preserve" style="fill:#0f0">MenuActive</text>
<g shape-rendering="crispEdges"><rect x="6" y="719" width="922" height="2" fill="#fff"/><rect x="6" y="29" width="1" height="692" fill="#fff"/><rect x="6" y="29" width="922" height="1" fill="#fff"/></g>
<text class="mf" x="12" y="742" xml:space="preserve" textLength="684" lengthAdjust="spacing">INSTRUCTION INPUT via KEYBOARD or LEFT-MOUSE-CLICKS (HELP with RIGHT CLICKS)</text>
<text class="mf" x="12" y="787" xml:space="preserve">&gt;&gt;</text>
</svg>
</body></html>
